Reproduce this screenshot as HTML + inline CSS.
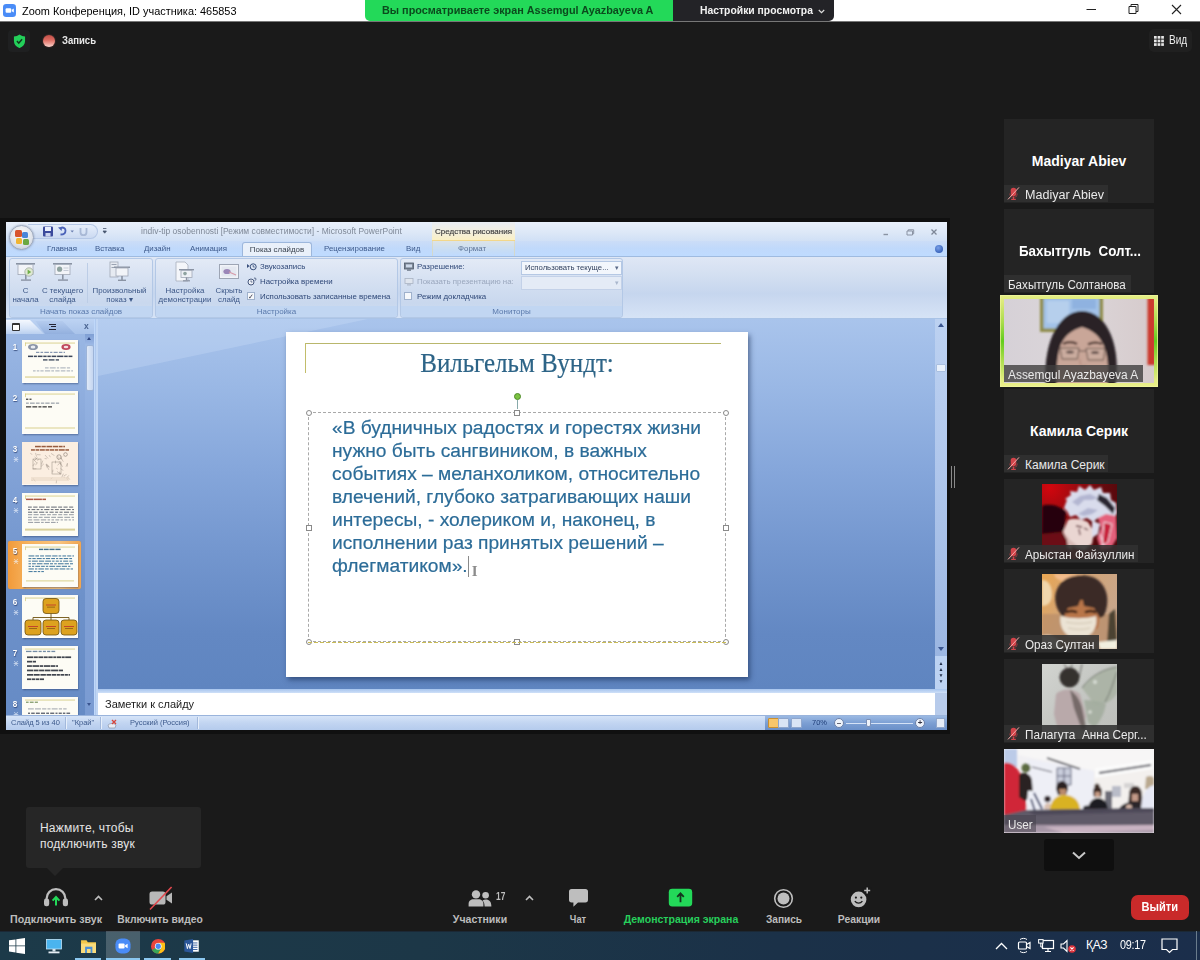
<!DOCTYPE html>
<html lang="ru">
<head>
<meta charset="utf-8">
<title>Zoom Конференция</title>
<style>
*{box-sizing:border-box;margin:0;padding:0}
html,body{width:1200px;height:960px;overflow:hidden}
body{background:#1a1a1a;font-family:"Liberation Sans",sans-serif;position:relative;color:#fff}
.abs{position:absolute}
/* ---------- zoom title bar ---------- */
#tb{position:absolute;left:0;top:0;width:1200px;height:22px;background:#fff;border-bottom:1px solid #777;color:#000;font-size:11.6px}
#tb .ttl{position:absolute;left:21.5px;top:4px;white-space:nowrap;transform:scaleX(.9425);transform-origin:0 0}
#banner{position:absolute;left:365px;top:0;width:308px;height:21px;background:#23d959;border-radius:0 0 0 5px;color:#0b4a1d;font-weight:bold;font-size:10.600px;line-height:21px;padding-left:17px;white-space:nowrap}
#opts{position:absolute;left:673px;top:0;width:161px;height:20.500px;background:#232327;border-radius:0 0 5px 0;color:#f2f2f2;font-weight:bold;font-size:10.600px;line-height:21px;padding-left:27px;white-space:nowrap}
/* ---------- participants ---------- */
.tile{position:absolute;left:1004px;width:150px;height:84px;background:#242424;overflow:hidden}
.tile .big{position:absolute;left:0;right:0;top:34px;text-align:center;font-weight:bold;font-size:14px;color:#fff;white-space:nowrap}
.tile .lab{position:absolute;left:0;bottom:1px;height:17px;background:rgba(49,49,49,.88);color:#eaeaea;font-size:12px;line-height:17px;padding:1.5px 4px 0 4px;white-space:nowrap}
.tile .lab.m{padding-left:21px}

/* ---------- powerpoint ---------- */
#ppt{position:absolute;left:6px;top:222px;width:941px;height:508px;background:#bfd8fa;overflow:hidden;font-size:8px;color:#3b5686;filter:blur(.25px)}
#ppt .abs{position:absolute}
.ptitle{position:absolute;left:0;top:0;width:941px;height:19px;background:linear-gradient(#e9f0fb,#dde8f7 55%,#d0e0f6)}
.qat{position:absolute;left:22px;top:2px;width:70px;height:15px;border-radius:0 8px 8px 0;background:linear-gradient(#e6eefb,#cbdaf1);border:1px solid #b4c7e6;border-left:none}
.pt-text{position:absolute;left:135px;top:4px;font-size:8.45px;color:#7f8998;white-space:nowrap;letter-spacing:.02px}
.ctx{position:absolute;left:426px;top:0;width:83px;height:19px;background:linear-gradient(#e9edf3,#f3efdc 60%,#fbf0c4);border:none;border-bottom:1.5px solid #f3d78a;color:#3c3c3c;font-size:8px;font-weight:normal;-webkit-text-stroke:.15px #3c3c3c;text-align:center;line-height:19px;white-space:nowrap}
.ptabs{position:absolute;left:0;top:19px;width:941px;height:15px;background:linear-gradient(#cbddf7,#c0d9fb 50%,#bfdbff)}
.ptabs span{position:absolute;top:3px;font-size:7.9px;color:#3d5a8c;white-space:nowrap}
.ptabs .act{position:absolute;left:236px;top:1px;width:70px;height:15px;background:#e9f0fa;border:1px solid #9db7dc;border-bottom:none;border-radius:3px 3px 0 0;text-align:center;font-size:7.9px;line-height:13px;color:#39424f;white-space:nowrap}
.ctxline{position:absolute;left:426px;top:0;width:83px;height:15px;border-left:1px solid rgba(227,214,160,.5);border-right:1px solid rgba(227,214,160,.5);background:linear-gradient(rgba(250,240,200,.35),rgba(250,238,180,0))}
.help{position:absolute;left:929px;top:4px;width:8px;height:8px;border-radius:50%;background:radial-gradient(circle at 40% 35%,#7aa0e8,#1f4ca8)}
.orb{position:absolute;left:3px;top:3px;width:25px;height:25px;border-radius:50%;background:radial-gradient(circle at 50% 35%,#fdfdfd,#dfe3ea 60%,#b9c1cf);border:1px solid #9aa6bb;box-shadow:0 0 2px rgba(60,80,120,.5)}
.orb i,.orb b,.orb u,.orb em{position:absolute;width:7px;height:7px;border-radius:1.5px}
.orb i{left:5px;top:4px;background:#d8552e}.orb b{left:12px;top:6px;background:#4a86d8;width:6px;height:6px}
.orb u{left:6px;top:12px;background:#f0b432;width:6px;height:6px}.orb em{left:12.5px;top:12.5px;background:#6aa842;width:6px;height:6px}
.ribbon{position:absolute;left:0;top:34px;width:941px;height:63px;background:linear-gradient(#dfe7f5,#d3dff1 30%,#c6d6ee 60%,#d6e3f6);border-top:1px solid #9fbbe0;border-bottom:1px solid #a9c3e6}
.grp{position:absolute;top:1px;height:60px;border:1px solid #b3c8e6;border-radius:3px;background:linear-gradient(#e3eaf6,#d6e1f2 35%,#c9d8ee 75%,#cddbf0)}
.grp .gl{position:absolute;left:0;right:0;bottom:0;height:11px;background:#c1d6f2;text-align:center;font-size:8px;line-height:11px;color:#5a79ab;white-space:nowrap;border-radius:0 0 3px 3px}
.gsep{position:absolute;top:4px;height:40px;width:1px;background:#bccde6}
.bigb{position:absolute;top:2px;width:0;text-align:center}
.bigb svg{position:absolute;left:-11px;top:0}
.bigb div{position:absolute;top:25px;left:-40px;width:80px;text-align:center;line-height:9px;font-size:7.9px;color:#3b5686;white-space:nowrap}
.sm{position:absolute;height:11px;line-height:11px;font-size:7.9px;color:#2f4878;white-space:nowrap;padding-left:13px}
.sm svg{position:absolute;left:0;top:1px}
.sm.dis{color:#9aa7bd}
.sm .cb{position:absolute;left:0;top:1px;width:8px;height:8px;background:#f6f8fb;border:1px solid #9fb1cc;font-style:normal;font-size:7px;line-height:7px;color:#334;text-align:center}
.dd{position:absolute;width:101px;height:14px;background:#f2f6fc;border:1px solid #b5c8e4;font-size:7.7px;line-height:12px;padding-left:3px;color:#2f3f5c;white-space:nowrap}
.dd b{position:absolute;right:2px;top:0;font-size:7px;color:#5a6a88;font-weight:normal}
.dd.dis{background:#e4ebf6;border-color:#c3d1e8}.dd.dis b{color:#a9b6cc}

.pane{position:absolute;left:0;top:97px;width:88px;height:396px;background:linear-gradient(#9cb9e5,#84a4d8 35%,#6d91ca 70%,#668bc5);overflow:hidden}
.ptab{position:absolute;left:0;top:0;width:88px;height:15px;background:linear-gradient(#bdd3f3,#a9c3ea)}
.ptab .t2{position:absolute;left:29px;top:1.500px;width:40px;height:13.500px;background:linear-gradient(#b4cbee,#93b0de);clip-path:polygon(0 0,27px 0,40px 13.500px,10px 13.500px)}
.ptab .t2 i{position:absolute;left:14px;top:3px;width:7px;height:6.500px;border-top:1.500px solid #223;border-bottom:1.500px solid #223}
.ptab .t2 i:after{content:"";position:absolute;left:2px;top:1.200px;width:5px;height:1.200px;background:#223}
.ptab .t1{position:absolute;left:0;top:1px;width:38px;height:14px;background:linear-gradient(#f4f8fe,#d5e3f7 60%,#b9cfef);clip-path:polygon(0 0,24px 0,38px 14px,0 14px)}
.ptab .t1 i{position:absolute;left:5.500px;top:3px;width:8px;height:7.500px;border:1px solid #333;border-top-width:2px;border-radius:1px;background:#fff}
.ptab .tx{position:absolute;left:78px;top:2px;font-size:8.500px;font-weight:bold;color:#4a6491;line-height:10px}
.sel{position:absolute;left:2px;top:222px;width:73px;height:48px;border-radius:2px;background:linear-gradient(90deg,#f19a3a,#f7b561 30%,#f9c47e 70%,#f0a550);box-shadow:0 0 1px #c87a20}
.th{position:absolute;left:16px;width:56px;height:42.5px;background:#fff;box-shadow:.5px 1px 1.5px rgba(30,50,90,.55);overflow:hidden}
.th em{position:fixed}
.th .ol{position:absolute;left:3px;right:3px;top:3px;height:1px;background:#d9cf8c}
.th .ol.b{top:auto;bottom:4px}
.th .l{position:absolute;height:1.4px;opacity:.8}
.th .c{position:absolute;width:9px;height:5px;border-radius:50%}
.th .bx{position:absolute;background:#dfa21e;border:1px solid #7a5a12;border-radius:3px}
.th .sk{position:absolute;left:9px;top:13px;width:40px;height:26px;background:repeating-linear-gradient(60deg,rgba(120,100,90,.35) 0 1px,transparent 1px 4px),repeating-linear-gradient(-40deg,rgba(120,100,90,.3) 0 1px,transparent 1px 5px)}
.th .tx4{position:absolute;left:6px;top:13px;width:45px;height:20px;background:repeating-linear-gradient(#667 0 1px,transparent 1px 2.8px);opacity:.7}
.th .tx5{position:absolute;left:6px;top:11px;width:43px;height:19px;background:repeating-linear-gradient(#3a6f96 0 1.2px,transparent 1.2px 2.8px);opacity:.85}
.th .tx7{position:absolute;left:5px;top:11px;width:40px;height:26px;background:repeating-linear-gradient(#334 0 1.4px,transparent 1.4px 4.6px);opacity:.75}
.num{position:absolute;left:4px;width:10px;text-align:center;color:#fff;font-weight:bold;font-size:9px;line-height:9px;text-shadow:.5px .8px 1px rgba(30,50,100,.7);transform:scaleX(.9)}
.st{position:absolute;left:6.500px;opacity:.7;transform:scale(.85)}
.vsb{position:absolute;left:78.5px;top:15px;width:10px;height:381px;background:linear-gradient(#9dbae6,#86a6da 40%,#7a9bd2)}
.vsb .up{position:absolute;left:0;top:0;width:10px;height:10px;background:linear-gradient(#7f9fd4,#9ab6e4)}
.vsb .up:after{content:"";position:absolute;left:2.5px;top:3px;border:2.5px solid transparent;border-bottom:3px solid #2c4480;border-top:none}
.vsb .thumb{position:absolute;left:1px;top:11px;width:8px;height:46px;border-radius:2px;background:linear-gradient(90deg,#dfe9f8,#c5d6f0);border:1px solid #9db4d8}
.vsb .dn{position:absolute;left:2.5px;top:369px;border:2.5px solid transparent;border-top:3px solid #3a5590;border-bottom:none}
.split{position:absolute;left:88.5px;top:97px;width:4px;height:396px;background:linear-gradient(90deg,#a7c3ec,#c9dcf6,#a7c3ec)}
.work{position:absolute;left:92px;top:97px;width:849px;height:370px;background:linear-gradient(#a9c4ec 0%,#9ab8e5 18%,#86a7db 40%,#7497cf 62%,#6388c3 85%,#5f85c0 100%);overflow:hidden}
.shine{position:absolute;left:0;top:0;width:275px;height:58px;background:rgba(225,238,255,.22);clip-path:polygon(0 0,270px 0,0 57px)}
.slide{position:absolute;left:188px;top:13px;width:462px;height:345px;background:#fff;box-shadow:2px 3px 5px rgba(20,40,80,.55)}
.sline{position:absolute;left:19px;top:11px;width:416px;height:1px;background:#b9b76c}
.svline{position:absolute;left:19px;top:11px;width:1px;height:30px;background:#c2bd6a}
.stitle{position:absolute;left:0;width:462px;top:16px;text-align:center;font-family:"Liberation Serif",serif;font-size:27px;line-height:31px;color:#2d6487;white-space:nowrap;transform:scaleX(.925);-webkit-text-stroke:.2px #2d6487}
.tbox{position:absolute;left:22px;top:80px;width:418px;height:230px;border:1px dashed #a9a9a9}
.tbox .h{position:absolute;width:6px;height:6px;background:#fff;border:1px solid #8a8a8a}
.tbox .h.c{border-radius:50%}
.tbox .rot{position:absolute;left:205px;top:-20.5px;width:7px;height:7px;border-radius:50%;background:#7cc242;border:1px solid #4d8a28}
.tbox .rotl{position:absolute;left:208px;top:-13px;width:1px;height:9px;background:#8aa}
.tbox .body{position:absolute;left:23px;top:3px;font-size:19.2px;line-height:23.05px;color:#2c6c98;white-space:nowrap;-webkit-text-stroke:.2px #2c6c98}
.caret{display:inline-block;width:1px;height:21px;background:#8a8a8a;vertical-align:-5px;margin-left:0}
.ibeam{font-family:"Liberation Serif",serif;font-size:15px;font-weight:bold;color:#8c8c8c;margin-left:3px;position:relative;top:4px;-webkit-text-stroke:0}
.sbline{position:absolute;left:22px;top:309.5px;width:418px;height:1.5px;background:repeating-linear-gradient(90deg,#c9bb55 0 4px,transparent 4px 6px)}
.wsb{position:absolute;left:837px;top:0;width:12px;height:370px;background:linear-gradient(#bcd1f1,#b0c7ec 40%,#9fb9e3 80%,#98b3e0)}
.wsb .up{position:absolute;left:3px;top:4px;border:3px solid transparent;border-bottom:4px solid #3a5590;border-top:none}
.wsb .thumb{position:absolute;left:1px;top:45px;width:10px;height:8px;background:#e8f0fb;border:1px solid #a9bfe0;border-radius:1px}
.wsb .dn{position:absolute;left:3px;top:328px;border:3px solid transparent;border-top:4px solid #3a5590;border-bottom:none}
.wsb .pg{position:absolute;left:0;top:337px;width:12px;height:33px;background:#bcd2f2;font-size:5px;line-height:6px;color:#1d2a44;text-align:center;padding-top:4px}
.wsb .pg b{display:block;font-weight:normal}
.hsplit{position:absolute;left:92px;top:467px;width:849px;height:4px;background:linear-gradient(#a6c4ee,#cfe0f8)}
.notes{position:absolute;left:92px;top:471px;width:849px;height:22px;background:#fff;color:#1c1c1c;font-size:11px;line-height:22px;padding-left:7px;white-space:nowrap}
.notes .nsb{position:absolute;right:0;top:0;width:12px;height:22px;background:#b7cbeb}
.status{position:absolute;left:0;top:493px;width:941px;height:15px;background:linear-gradient(#d6e4f8,#c2d5f1 50%,#b5cbed);border-top:1px solid #9ab4dc}
.status span{position:absolute;top:2px;font-size:7.5px;color:#3d5a8c;white-space:nowrap;line-height:10px}
.status>i{position:absolute;top:1px;width:1px;height:12px;background:#a3b9dc;box-shadow:1px 0 #e6effb}
.status .sr{position:absolute;left:759px;top:0;width:182px;height:14px;background:linear-gradient(#9bb9e3,#7c9fd3 50%,#6a8fc8)}
.sr .vb{position:absolute;left:3px;top:2px;width:11px;height:10px;background:#d9e4f5;border:1px solid #8fa6cc;border-radius:1px}
.sr .vb.on{background:#f8c66a;border-color:#c98f30}
.sr .zc{position:absolute;top:2px;width:10px;height:10px;border-radius:50%;background:#eef3fb;border:1px solid #6a7fa8;color:#334;font-size:8px;line-height:7px;text-align:center;font-weight:bold}
.sr .zl{position:absolute;left:81px;top:7px;width:67px;height:1px;background:#d5e2f6}
.sr .zt{position:absolute;left:101px;top:3px;width:5px;height:8px;background:#eef3fb;border:1px solid #7a8fb6;border-radius:0 0 2px 2px}
.sr .fit{position:absolute;left:171px;top:2px;width:9px;height:10px;background:#e4ecf8;border:1px solid #8fa6cc}

/* ---------- bottom toolbar ---------- */
.tbtn{position:absolute;top:912px;font-size:11.5px;font-weight:bold;color:#bdbdbd;white-space:nowrap;transform:translateX(-50%);line-height:14px}

.abs{position:absolute}
.sx{display:inline-block;transform-origin:0 50%;white-space:nowrap}
.mic{position:absolute;left:3px;top:1px}
#act{position:absolute;left:1000px;top:295px;width:158px;height:92px;background:linear-gradient(#e6ef86 0%,#dbe97a 8%,#a8dc4a 30%,#62cc1c 50%,#a8dc4a 70%,#e1ec80 92%,#ecf08c 100%);box-shadow:inset 0 0 0 1px rgba(240,245,160,.7)}
#more{position:absolute;left:1044px;top:839px;width:70px;height:32px;background:#0f0f0f;border-radius:3px}
#more svg{position:absolute;left:27px;top:12px}
#tip{position:absolute;left:26px;top:807px;width:175px;height:61px;background:#262626;border-radius:3px;color:#e4e4e4;font-size:12px;line-height:15.500px;padding:14px 0 0 14px;white-space:nowrap;letter-spacing:.2px}
#tip i{position:absolute;left:21px;top:61px;border:8px solid transparent;border-top:8px solid #262626;border-bottom:none}
#leave{position:absolute;left:1131px;top:895px;width:58px;height:25px;border-radius:7px;background:#c92a2a;color:#fff;font-weight:bold;font-size:12px;line-height:25px;text-align:center}
#task>*{margin-top:-1px}
#task .hl{position:absolute;left:106px;top:0;width:34px;height:29px;background:rgba(255,255,255,.2)}
#task .ul{position:absolute;top:27px;height:2px;background:#8cc8f0}
#task .tt{top:7px;font-size:12px;color:#fff;line-height:14px;letter-spacing:-.3px}
#task .dsk{position:absolute;left:1196px;top:0;width:1px;height:29px;background:#6a7c8c}
/* ---------- taskbar ---------- */
#task{position:absolute;left:0;top:931px;width:1200px;height:29px;background:linear-gradient(90deg,#1c3a49 0%,#1c3747 35%,#1b3148 65%,#1b2e4b 100%);border-top:1px solid #1b2835}
</style>
</head>
<body>

<!-- ZOOM TITLE BAR -->
<div id="tb">
  <svg class="abs" style="left:3px;top:4px" width="13" height="13" viewBox="0 0 13 13"><rect width="13" height="13" rx="3.2" fill="#4a8cf7"/><rect x="2.6" y="4.2" width="5.6" height="4.6" rx="1" fill="#fff"/><path d="M8.8 5.8 L10.8 4.5 V8.5 L8.8 7.2Z" fill="#fff"/></svg>
  <div class="ttl">Zoom Конференция, ID участника: 465853</div>
  <div id="banner"><span class="sx" style="transform:scaleX(1.024)">Вы просматриваете экран Assemgul Ayazbayeva A</span></div>
  <div id="opts"><span class="sx" style="transform:scaleX(.979)">Настройки просмотра</span></div>
  <svg class="abs" style="left:1080px;top:0" width="110" height="21" viewBox="0 0 110 21"><path d="M6.500 9.500h9.500" stroke="#222" stroke-width="1"/><path d="M49 6.500h7v7h-7zM51 6.500v-2h7v7h-2" fill="none" stroke="#222" stroke-width="1"/><path d="M92 5l9 9M101 5l-9 9" stroke="#222" stroke-width="1.100"/></svg>
  <svg class="abs" style="left:817.500px;top:8.500px" width="7" height="5" viewBox="0 0 7 5"><path d="M.8 1l2.700 2.700L6.200 1" fill="none" stroke="#ddd" stroke-width="1.200"/></svg>

</div>



<!-- top-left status + view -->
<div class="abs" style="left:8px;top:30px;width:22px;height:22px;border-radius:4px;background:#1f2021"></div>
<svg class="abs" style="left:12.500px;top:33.500px" width="13" height="14.500" viewBox="0 0 14 14" preserveAspectRatio="none"><path d="M7 .4C5.200 1.600 3.200 2.200 1 2.300v4.500c0 3.200 2.200 5.400 6 6.800 3.800-1.400 6-3.600 6-6.800V2.300C10.800 2.200 8.800 1.600 7 .4z" fill="#23d05a"/><path d="M4.200 6.800l2 2 3.600-3.800" fill="none" stroke="#12361e" stroke-width="1.500"/></svg>
<div class="abs" style="left:42.500px;top:35px;width:12px;height:12px;border-radius:50%;background:linear-gradient(#c4524a 5%,#dc6a60 40%,#ee9c92 70%,#f7d6d0 100%);box-shadow:0 0 1.500px rgba(230,120,110,.6)"></div>
<div class="abs" id="rec" style="left:62px;top:33px;transform:scaleX(.865);transform-origin:0 0;font-size:11px;font-weight:bold;color:#e9e9e9;line-height:14px">Запись</div>
<div class="abs" style="left:1149px;top:29px;width:43px;height:23px;border-radius:5px;background:#202020"></div>
<svg class="abs" style="left:1154px;top:35.500px" width="10" height="10" viewBox="0 0 10 10"><g fill="#e6e6e6"><rect x="0" y="0" width="2.700" height="2.700"/><rect x="3.600" y="0" width="2.700" height="2.700"/><rect x="7.200" y="0" width="2.700" height="2.700"/><rect x="0" y="3.600" width="2.700" height="2.700"/><rect x="3.600" y="3.600" width="2.700" height="2.700"/><rect x="7.200" y="3.600" width="2.700" height="2.700"/><rect x="0" y="7.200" width="2.700" height="2.700"/><rect x="3.600" y="7.200" width="2.700" height="2.700"/><rect x="7.200" y="7.200" width="2.700" height="2.700"/></g></svg>
<div class="abs" id="vid" style="left:1168.7px;top:33px;transform:scaleX(.84);transform-origin:0 0;font-size:12px;color:#efefef;line-height:14px">Вид</div>
<!-- splitter handle -->
<div class="abs" style="left:950.500px;top:466px;width:1.500px;height:22px;background:#8a8a8a"></div>
<div class="abs" style="left:953.500px;top:466px;width:1.500px;height:22px;background:#8a8a8a"></div>

<div class="abs" style="left:0;top:218px;width:950px;height:516px;background:#101010"></div>
<!-- POWERPOINT WINDOW (shared screen) -->
<div id="ppt">
  <div class="ptitle">
    <div class="qat"></div>
    <svg class="abs" style="left:36px;top:3px" width="70" height="14" viewBox="0 0 70 14">
      <rect x="1" y="1.5" width="10" height="10" rx="1" fill="#3b4a9c"/><rect x="3" y="2" width="6" height="4" fill="#e8eefc"/><rect x="3.5" y="8" width="5" height="3.5" fill="#c9d3ee"/>
      <path d="M18.5 9.5c3.5 0 5-1.6 5-3.8s-1.6-3.2-3.8-3.2" fill="none" stroke="#4a62b8" stroke-width="1.8"/><path d="M16 2.5l4.2-.8-.6 4.2z" fill="#4a62b8"/>
      <path d="M28.5 5.5h3.4l-1.7 2z" fill="#6b7fb0"/>
      <path d="M38.5 3v4.2a3 3 0 0 0 6 0V3" fill="none" stroke="#a9b9d6" stroke-width="1.8"/>
      <path d="M61 3.5h3.4M61 6h3.4l-1.7 2.2z" stroke="#46556f" stroke-width=".8" fill="#46556f"/>
    </svg>
    <div class="pt-text">indiv-tip osobennosti [Режим совместимости] - Microsoft PowerPoint</div>
    <div class="ctx">Средства рисования</div>
    <svg class="abs" style="left:866px;top:5px" width="70" height="12" viewBox="0 0 70 12"><path d="M11.500 7.500h4.500" stroke="#8a93a3" stroke-width="1.400"/><path d="M35 4h5.500v4H35zM36.200 4V2.800h5.500v4H40.500" fill="none" stroke="#8a93a3" stroke-width="1"/><path d="M59.500 2.500l5 5M64.500 2.500l-5 5" stroke="#7d8797" stroke-width="1.300"/></svg>
  </div>
  <div class="ptabs">
    <span style="left:41px">Главная</span><span style="left:89px">Вставка</span><span style="left:138px">Дизайн</span><span style="left:184px">Анимация</span>
    <div class="act">Показ слайдов</div>
    <span style="left:318px">Рецензирование</span><span style="left:400px">Вид</span><span style="left:452px">Формат</span>
    <div class="ctxline"></div>
    <div class="help"></div>
  </div>
  <div class="orb"><i></i><b></b><u></u><em></em></div>
  <div class="ribbon">
    <div class="grp" style="left:3px;width:144px"><div class="gl">Начать показ слайдов</div>
      <div class="gsep" style="left:77px"></div>
      <div class="bigb" style="left:15.5px"><svg width="22" height="22" viewBox="0 0 22 22"><rect x="1" y="2" width="19" height="1.6" fill="#8a93a3"/><rect x="3" y="3.6" width="15" height="10" fill="#f2f4f8" stroke="#a0a8b6" stroke-width=".8"/><rect x="10" y="13.6" width="1.6" height="5" fill="#8a93a3"/><rect x="6" y="18.4" width="10" height="1.4" fill="#8a93a3"/><circle cx="14" cy="11" r="4.2" fill="#dfe9d2" stroke="#9aa39a" stroke-width=".7"/><path d="M12.6 8.6l3.6 2.4-3.6 2.4z" fill="#6fae48"/></svg><div>С<br>начала</div></div>
      <div class="bigb" style="left:52.5px"><svg width="22" height="22" viewBox="0 0 22 22"><rect x="1" y="2" width="19" height="1.6" fill="#8a93a3"/><rect x="3" y="3.6" width="15" height="10" fill="#f2f4f8" stroke="#a0a8b6" stroke-width=".8"/><rect x="10" y="13.6" width="1.6" height="5" fill="#8a93a3"/><rect x="6" y="18.4" width="10" height="1.4" fill="#8a93a3"/><circle cx="7.6" cy="8.2" r="2.6" fill="#8fa3a0"/><rect x="11.5" y="6.5" width="5" height="1" fill="#c5cbd6"/><rect x="11.5" y="9" width="5" height="1" fill="#c5cbd6"/></svg><div>С текущего<br>слайда</div></div>
      <div class="bigb" style="left:109.5px"><svg width="22" height="22" viewBox="0 0 22 22"><rect x="1" y="1" width="8" height="15" fill="#e6eaf1" stroke="#a0a8b6" stroke-width=".8"/><rect x="2.5" y="3" width="5" height="1" fill="#9aa3b2"/><rect x="2.5" y="6" width="5" height="1" fill="#9aa3b2"/><rect x="5" y="5.5" width="16" height="1.5" fill="#8a93a3"/><rect x="7" y="7" width="12" height="8" fill="#f2f4f8" stroke="#a0a8b6" stroke-width=".8"/><rect x="12.2" y="15" width="1.6" height="4" fill="#8a93a3"/><rect x="9" y="18.6" width="8" height="1.4" fill="#8a93a3"/></svg><div>Произвольный<br>показ ▾</div></div>
    </div>
    <div class="grp" style="left:149px;width:243px"><div class="gl">Настройка</div>
      <div class="bigb" style="left:29px"><svg width="22" height="22" viewBox="0 0 22 22"><path d="M2 1h9l3 3v16H2z" fill="#f4f6fa" stroke="#a7aebb" stroke-width=".8"/><rect x="5" y="8" width="15" height="1.4" fill="#8a93a3"/><rect x="7" y="9.4" width="11" height="7" fill="#eef1f6" stroke="#a0a8b6" stroke-width=".8"/><circle cx="11" cy="12.6" r="1.8" fill="#8fa3a0"/><rect x="11.8" y="16.4" width="1.4" height="3" fill="#8a93a3"/><rect x="9" y="19.2" width="7" height="1.2" fill="#8a93a3"/></svg><div>Настройка<br>демонстрации</div></div>
      <div class="bigb" style="left:73px"><svg width="22" height="22" viewBox="0 0 22 22"><rect x="1.5" y="3.5" width="19" height="14" fill="#f1f3f8" stroke="#9da5b4" stroke-width="1"/><rect x="3.5" y="5.5" width="15" height="10" fill="#e4e8f0"/><ellipse cx="9" cy="10.5" rx="3.6" ry="2.6" fill="#9b86b8"/><path d="M11 11l7 3" stroke="#d79aa8" stroke-width="1.2"/></svg><div>Скрыть<br>слайд</div></div>
      <div class="sm" style="left:91px;top:2px"><svg width="10" height="9" viewBox="0 0 10 9"><path d="M0 2l2.6 2L0 6z" fill="#39507c"/><circle cx="6.2" cy="4.8" r="3" fill="none" stroke="#39507c" stroke-width="1"/><path d="M6.2 3v2h1.6" stroke="#39507c" stroke-width=".8" fill="none"/></svg>Звукозапись</div>
      <div class="sm" style="left:91px;top:17px"><svg width="10" height="9" viewBox="0 0 10 9"><circle cx="4" cy="5" r="3" fill="#eef1f7" stroke="#46587c" stroke-width="1"/><path d="M4 3.4V5h1.4" stroke="#46587c" stroke-width=".8" fill="none"/><path d="M7 1.2c1.6-.6 2.6.6 1.6 1.8l-.8.8" stroke="#46587c" stroke-width=".9" fill="none"/></svg>Настройка времени</div>
      <div class="sm" style="left:91px;top:32px"><i class="cb">✓</i>Использовать записанные времена</div>
    </div>
    <div class="grp" style="left:394px;width:223px"><div class="gl">Мониторы</div>
      <div class="sm" style="left:3px;top:2px"><svg width="10" height="9" viewBox="0 0 10 9"><rect x=".5" y="1" width="9" height="6" fill="#7c8796" stroke="#4e5a6b" stroke-width=".8"/><rect x="2" y="2.4" width="6" height="3" fill="#cdd9ea"/><rect x="3" y="7.6" width="4" height="1" fill="#4e5a6b"/></svg>Разрешение:</div>
      <div class="sm dis" style="left:3px;top:17px"><svg width="10" height="9" viewBox="0 0 10 9"><rect x="1" y="1.5" width="8" height="5" fill="#dfe5ee" stroke="#a8b2c2" stroke-width=".8"/><rect x="3" y="7.4" width="4" height="1" fill="#a8b2c2"/></svg>Показать презентацию на:</div>
      <div class="sm" style="left:3px;top:32px"><i class="cb"></i>Режим докладчика</div>
      <div class="dd" style="left:120px;top:2px">Использовать текуще...<b>▾</b></div>
      <div class="dd dis" style="left:120px;top:17px"><b>▾</b></div>
    </div>
  </div>

  <!-- left thumbnail pane -->
  <div class="pane">
    <div class="ptab">
      <div class="t2"><i></i></div><div class="t1"><i></i></div><div class="tx">x</div>
    </div>
    <div class="sel"></div><div class="num" style="top:24px">1</div><div class="num" style="top:75px">2</div><div class="num" style="top:126px">3</div><div class="num" style="top:177px">4</div><div class="num" style="top:228px">5</div><div class="num" style="top:279px">6</div><div class="num" style="top:330px">7</div><div class="num" style="top:381px">8</div>
    <div class="th" style="top:21px"><svg width="56" height="42.5" viewBox="0 0 56 42.5" style="position:absolute;left:0;top:0"><rect width="56" height="42.5" fill="#fdfcf5"/><rect x="3" y="2.6" width="50" height=".9" fill="#d6cd88"/><rect x="3" y="2.6" width=".8" height="3.500" fill="#d6cd88"/><ellipse cx="11" cy="7" rx="5" ry="3.100" fill="#8a94a6"/><ellipse cx="11" cy="7" rx="2.400" ry="1.500" fill="#e9ecf1"/><ellipse cx="44" cy="7" rx="4.600" ry="2.900" fill="#c0485c"/><ellipse cx="44" cy="7" rx="2.300" ry="1.300" fill="#f4dfe2"/><rect x="14.0" y="11.8" width="3.3" height="1.1" fill="#5a7196" opacity="0.8"/><rect x="18.5" y="11.8" width="2.6" height="1.1" fill="#5a7196" opacity="0.8"/><rect x="22.3" y="11.8" width="4.6" height="1.1" fill="#5a7196" opacity="0.8"/><rect x="28.1" y="11.8" width="2.3" height="1.1" fill="#5a7196" opacity="0.8"/><rect x="31.6" y="11.8" width="4.1" height="1.1" fill="#5a7196" opacity="0.8"/><rect x="36.9" y="11.8" width="3.5" height="1.1" fill="#5a7196" opacity="0.8"/><rect x="41.6" y="11.8" width="1.4" height="1.1" fill="#5a7196" opacity="0.8"/><rect x="6.0" y="15.6" width="5.0" height="1.5" fill="#26324a" opacity="0.9"/><rect x="11.8" y="15.6" width="3.1" height="1.5" fill="#26324a" opacity="0.9"/><rect x="15.8" y="15.6" width="4.7" height="1.5" fill="#26324a" opacity="0.9"/><rect x="21.3" y="15.6" width="3.3" height="1.5" fill="#26324a" opacity="0.9"/><rect x="25.4" y="15.6" width="3.4" height="1.5" fill="#26324a" opacity="0.9"/><rect x="29.6" y="15.6" width="4.7" height="1.5" fill="#26324a" opacity="0.9"/><rect x="35.1" y="15.6" width="6.3" height="1.5" fill="#26324a" opacity="0.9"/><rect x="42.2" y="15.6" width="3.5" height="1.5" fill="#26324a" opacity="0.9"/><rect x="46.5" y="15.6" width="3.9" height="1.5" fill="#26324a" opacity="0.9"/><rect x="21.0" y="19.2" width="4.5" height="1.4" fill="#26324a" opacity="0.85"/><rect x="26.7" y="19.2" width="5.8" height="1.4" fill="#26324a" opacity="0.85"/><rect x="33.7" y="19.2" width="3.3" height="1.4" fill="#26324a" opacity="0.85"/><rect x="23.0" y="27.4" width="3.6" height="1" fill="#8d98a8" opacity="0.8"/><rect x="27.8" y="27.4" width="5.9" height="1" fill="#8d98a8" opacity="0.8"/><rect x="34.9" y="27.4" width="2.2" height="1" fill="#8d98a8" opacity="0.8"/><rect x="38.3" y="27.4" width="5.4" height="1" fill="#8d98a8" opacity="0.8"/><rect x="44.9" y="27.4" width="3.2" height="1" fill="#8d98a8" opacity="0.8"/><rect x="11.0" y="30.4" width="2.6" height="1" fill="#8d98a8" opacity="0.8"/><rect x="14.8" y="30.4" width="2.5" height="1" fill="#8d98a8" opacity="0.8"/><rect x="18.4" y="30.4" width="3.2" height="1" fill="#8d98a8" opacity="0.8"/><rect x="22.9" y="30.4" width="5.3" height="1" fill="#8d98a8" opacity="0.8"/><rect x="29.3" y="30.4" width="2.7" height="1" fill="#8d98a8" opacity="0.8"/><rect x="33.3" y="30.4" width="4.3" height="1" fill="#8d98a8" opacity="0.8"/><rect x="38.8" y="30.4" width="4.6" height="1" fill="#8d98a8" opacity="0.8"/><rect x="44.6" y="30.4" width="3.5" height="1" fill="#8d98a8" opacity="0.8"/><rect x="49.2" y="30.4" width="1.8" height="1" fill="#8d98a8" opacity="0.8"/><rect x="3" y="36.4" width="50" height="1.300" fill="#ddd59a"/></svg></div>
    <div class="th" style="top:72px"><svg width="56" height="42.5" viewBox="0 0 56 42.5" style="position:absolute;left:0;top:0"><rect width="56" height="42.5" fill="#fdfcf5"/><rect x="3" y="2.6" width="50" height=".9" fill="#d6cd88"/><rect x="3" y="2.6" width=".8" height="3.500" fill="#d6cd88"/><rect x="4.0" y="7.6" width="2.3" height="1.3" fill="#333" opacity="0.9"/><rect x="7.5" y="7.6" width="2.0" height="1.3" fill="#333" opacity="0.9"/><rect x="4.0" y="11.6" width="2.8" height="1.1" fill="#7d8694" opacity="0.85"/><rect x="8.0" y="11.6" width="4.7" height="1.1" fill="#7d8694" opacity="0.85"/><rect x="13.9" y="11.6" width="3.7" height="1.1" fill="#7d8694" opacity="0.85"/><rect x="18.9" y="11.6" width="3.3" height="1.1" fill="#7d8694" opacity="0.85"/><rect x="23.3" y="11.6" width="4.3" height="1.1" fill="#7d8694" opacity="0.85"/><rect x="28.9" y="11.6" width="3.8" height="1.1" fill="#7d8694" opacity="0.85"/><rect x="33.9" y="11.6" width="3.2" height="1.1" fill="#7d8694" opacity="0.85"/><rect x="4.0" y="15.2" width="5.2" height="1.3" fill="#2c2c2c" opacity="0.9"/><rect x="10.4" y="15.2" width="4.8" height="1.3" fill="#2c2c2c" opacity="0.9"/><rect x="16.4" y="15.2" width="3.0" height="1.3" fill="#2c2c2c" opacity="0.9"/><rect x="20.5" y="15.2" width="4.3" height="1.3" fill="#2c2c2c" opacity="0.9"/><rect x="26.0" y="15.2" width="4.0" height="1.3" fill="#2c2c2c" opacity="0.9"/><rect x="3" y="36" width="50" height="2" fill="#ebe6c2"/></svg></div>
    <div class="th" style="top:123px"><svg width="56" height="42.5" viewBox="0 0 56 42.5" style="position:absolute;left:0;top:0"><rect width="56" height="42.5" fill="#fbeee1"/><rect x="13.0" y="3.8" width="5.8" height="1.5" fill="#8c4a2c" opacity="0.9"/><rect x="19.5" y="3.8" width="4.3" height="1.5" fill="#8c4a2c" opacity="0.9"/><rect x="24.5" y="3.8" width="5.6" height="1.5" fill="#8c4a2c" opacity="0.9"/><rect x="30.8" y="3.8" width="5.5" height="1.5" fill="#8c4a2c" opacity="0.9"/><rect x="37.0" y="3.8" width="3.6" height="1.5" fill="#8c4a2c" opacity="0.9"/><rect x="41.3" y="3.8" width="1.7" height="1.5" fill="#8c4a2c" opacity="0.9"/><rect x="9.0" y="7.2" width="3.9" height="1.5" fill="#8c4a2c" opacity="0.9"/><rect x="13.6" y="7.2" width="3.7" height="1.5" fill="#8c4a2c" opacity="0.9"/><rect x="18.0" y="7.2" width="4.8" height="1.5" fill="#8c4a2c" opacity="0.9"/><rect x="23.5" y="7.2" width="3.8" height="1.5" fill="#8c4a2c" opacity="0.9"/><rect x="27.9" y="7.2" width="4.3" height="1.5" fill="#8c4a2c" opacity="0.9"/><rect x="32.9" y="7.2" width="3.4" height="1.5" fill="#8c4a2c" opacity="0.9"/><rect x="37.0" y="7.2" width="5.7" height="1.5" fill="#8c4a2c" opacity="0.9"/><rect x="43.4" y="7.2" width="3.6" height="1.5" fill="#8c4a2c" opacity="0.9"/><path d="M41.4 31.7l-1.7 3.8" stroke="#6e6258" stroke-width=".5" opacity=".6"/><path d="M13.4 23.3l2.1 -2.8" stroke="#6e6258" stroke-width=".5" opacity=".6"/><path d="M27.1 13.1l1.3 2.1" stroke="#6e6258" stroke-width=".5" opacity=".6"/><path d="M30.2 35.6l-1.5 1.6" stroke="#6e6258" stroke-width=".5" opacity=".6"/><path d="M31.0 27.7l-0.4 2.7" stroke="#6e6258" stroke-width=".5" opacity=".6"/><path d="M44.0 24.8l1.3 -3.5" stroke="#6e6258" stroke-width=".5" opacity=".6"/><path d="M35.0 29.5l3.9 2.6" stroke="#6e6258" stroke-width=".5" opacity=".6"/><path d="M19.5 22.4l1.3 -3.8" stroke="#6e6258" stroke-width=".5" opacity=".6"/><path d="M26.1 16.5l-3.1 -3.5" stroke="#6e6258" stroke-width=".5" opacity=".6"/><path d="M37.4 15.5l-2.0 -0.9" stroke="#6e6258" stroke-width=".5" opacity=".6"/><path d="M41.2 14.2l-0.4 0.4" stroke="#6e6258" stroke-width=".5" opacity=".6"/><path d="M41.7 34.1l2.9 -1.8" stroke="#6e6258" stroke-width=".5" opacity=".6"/><path d="M24.4 21.7l3.1 3.7" stroke="#6e6258" stroke-width=".5" opacity=".6"/><path d="M14.6 16.8l-2.1 -2.1" stroke="#6e6258" stroke-width=".5" opacity=".6"/><path d="M26.9 27.9l-1.9 -4.0" stroke="#6e6258" stroke-width=".5" opacity=".6"/><path d="M24.5 22.0l0.5 3.6" stroke="#6e6258" stroke-width=".5" opacity=".6"/><path d="M34.5 25.9l0.9 1.4" stroke="#6e6258" stroke-width=".5" opacity=".6"/><path d="M11.0 36.3l2.2 3.0" stroke="#6e6258" stroke-width=".5" opacity=".6"/><path d="M38.5 22.6l-0.8 -3.2" stroke="#6e6258" stroke-width=".5" opacity=".6"/><path d="M32.5 13.7l-3.5 -2.3" stroke="#6e6258" stroke-width=".5" opacity=".6"/><path d="M15.0 21.2l-3.6 -4.0" stroke="#6e6258" stroke-width=".5" opacity=".6"/><path d="M14.6 14.7l-1.1 -3.8" stroke="#6e6258" stroke-width=".5" opacity=".6"/><path d="M41.4 28.6l-2.8 -2.0" stroke="#6e6258" stroke-width=".5" opacity=".6"/><path d="M21.9 21.8l-3.0 2.8" stroke="#6e6258" stroke-width=".5" opacity=".6"/><path d="M45.7 24.6l-0.1 -3.3" stroke="#6e6258" stroke-width=".5" opacity=".6"/><path d="M12.8 21.3l-1.9 2.6" stroke="#6e6258" stroke-width=".5" opacity=".6"/><path d="M15.0 12.6l3.6 0.2" stroke="#6e6258" stroke-width=".5" opacity=".6"/><path d="M14.4 26.7l-3.8 0.2" stroke="#6e6258" stroke-width=".5" opacity=".6"/><path d="M45.2 35.3l1.6 -1.9" stroke="#6e6258" stroke-width=".5" opacity=".6"/><path d="M22.6 16.5l2.2 0.3" stroke="#6e6258" stroke-width=".5" opacity=".6"/><path d="M37.8 20.9l-2.2 2.5" stroke="#6e6258" stroke-width=".5" opacity=".6"/><path d="M45.4 35.0l2.4 2.5" stroke="#6e6258" stroke-width=".5" opacity=".6"/><path d="M36.4 18.1l0.1 -1.2" stroke="#6e6258" stroke-width=".5" opacity=".6"/><path d="M10.1 12.8l-1.8 -1.9" stroke="#6e6258" stroke-width=".5" opacity=".6"/><path d="M34.6 37.8l-0.4 3.5" stroke="#6e6258" stroke-width=".5" opacity=".6"/><path d="M45.6 37.8l-1.1 -2.2" stroke="#6e6258" stroke-width=".5" opacity=".6"/><path d="M17.4 17.3l-2.4 1.0" stroke="#6e6258" stroke-width=".5" opacity=".6"/><path d="M42.3 34.7l-0.2 1.2" stroke="#6e6258" stroke-width=".5" opacity=".6"/><path d="M38.6 14.3l1.3 3.3" stroke="#6e6258" stroke-width=".5" opacity=".6"/><path d="M37.9 32.3l-0.2 -2.6" stroke="#6e6258" stroke-width=".5" opacity=".6"/><path d="M38.2 21.0l2.4 3.8" stroke="#6e6258" stroke-width=".5" opacity=".6"/><path d="M23.6 22.8l3.6 1.8" stroke="#6e6258" stroke-width=".5" opacity=".6"/><path d="M15.3 15.4l-2.8 3.2" stroke="#6e6258" stroke-width=".5" opacity=".6"/><path d="M38.8 15.9l2.6 3.8" stroke="#6e6258" stroke-width=".5" opacity=".6"/><path d="M33.3 21.5l0.4 -3.0" stroke="#6e6258" stroke-width=".5" opacity=".6"/><path d="M9.5 38.2l1.2 0.2" stroke="#6e6258" stroke-width=".5" opacity=".6"/><rect x="11" y="17" width="8" height="10" fill="none" stroke="#6e6258" stroke-width=".5" opacity=".7"/><rect x="30" y="20" width="9" height="12" fill="none" stroke="#6e6258" stroke-width=".5" opacity=".7"/><circle cx="37" cy="15" r="2.200" fill="none" stroke="#6e6258" stroke-width=".5"/><circle cx="43.500" cy="12.500" r="1.800" fill="none" stroke="#6e6258" stroke-width=".5"/><rect x="9" y="35" width="38" height="4" fill="#e9d9c6" opacity=".6"/></svg></div>
    <svg class="st" style="top:137px" width="6" height="7" viewBox="0 0 6 7"><path d="M1 .5l4 6M5 .5l-4 6M0 3.500h6" stroke="#eef3fb" stroke-width="1"/></svg>
    <div class="th" style="top:174px"><svg width="56" height="42.5" viewBox="0 0 56 42.5" style="position:absolute;left:0;top:0"><rect width="56" height="42.5" fill="#fdfcf5"/><rect x="3" y="2.6" width="50" height=".9" fill="#d6cd88"/><rect x="3" y="2.6" width=".8" height="3.500" fill="#d6cd88"/><rect x="4.0" y="5.6" width="7.5" height="1.5" fill="#a6432f" opacity="0.9"/><rect x="12.0" y="5.6" width="7.9" height="1.5" fill="#a6432f" opacity="0.9"/><rect x="20.4" y="5.6" width="3.6" height="1.5" fill="#a6432f" opacity="0.9"/><rect x="6.0" y="13.6" width="3.8" height="1" fill="#3c4452" opacity="0.8"/><rect x="11.2" y="13.6" width="4.3" height="1" fill="#3c4452" opacity="0.8"/><rect x="17.0" y="13.6" width="5.6" height="1" fill="#3c4452" opacity="0.8"/><rect x="24.0" y="13.6" width="3.7" height="1" fill="#3c4452" opacity="0.8"/><rect x="29.1" y="13.6" width="5.7" height="1" fill="#3c4452" opacity="0.8"/><rect x="36.1" y="13.6" width="4.0" height="1" fill="#3c4452" opacity="0.8"/><rect x="41.5" y="13.6" width="4.1" height="1" fill="#3c4452" opacity="0.8"/><rect x="47.1" y="13.6" width="4.1" height="1" fill="#3c4452" opacity="0.8"/><rect x="6.0" y="16.1" width="2.1" height="1" fill="#3c4452" opacity="0.8"/><rect x="9.5" y="16.1" width="3.8" height="1" fill="#3c4452" opacity="0.8"/><rect x="14.6" y="16.1" width="2.7" height="1" fill="#3c4452" opacity="0.8"/><rect x="18.8" y="16.1" width="2.0" height="1" fill="#3c4452" opacity="0.8"/><rect x="22.2" y="16.1" width="5.2" height="1" fill="#3c4452" opacity="0.8"/><rect x="28.8" y="16.1" width="2.7" height="1" fill="#3c4452" opacity="0.8"/><rect x="32.9" y="16.1" width="3.9" height="1" fill="#3c4452" opacity="0.8"/><rect x="38.2" y="16.1" width="4.9" height="1" fill="#3c4452" opacity="0.8"/><rect x="44.5" y="16.1" width="4.2" height="1" fill="#3c4452" opacity="0.8"/><rect x="50.1" y="16.1" width="1.9" height="1" fill="#3c4452" opacity="0.8"/><rect x="6.0" y="18.7" width="4.1" height="1" fill="#3c4452" opacity="0.8"/><rect x="11.5" y="18.7" width="4.2" height="1" fill="#3c4452" opacity="0.8"/><rect x="17.1" y="18.7" width="5.1" height="1" fill="#3c4452" opacity="0.8"/><rect x="23.6" y="18.7" width="2.4" height="1" fill="#3c4452" opacity="0.8"/><rect x="27.5" y="18.7" width="4.2" height="1" fill="#3c4452" opacity="0.8"/><rect x="33.1" y="18.7" width="3.0" height="1" fill="#3c4452" opacity="0.8"/><rect x="37.5" y="18.7" width="3.1" height="1" fill="#3c4452" opacity="0.8"/><rect x="42.0" y="18.7" width="5.1" height="1" fill="#3c4452" opacity="0.8"/><rect x="48.5" y="18.7" width="3.5" height="1" fill="#3c4452" opacity="0.8"/><rect x="6.0" y="21.2" width="4.2" height="1" fill="#7a828e" opacity="0.8"/><rect x="11.6" y="21.2" width="5.0" height="1" fill="#7a828e" opacity="0.8"/><rect x="18.1" y="21.2" width="5.6" height="1" fill="#7a828e" opacity="0.8"/><rect x="25.1" y="21.2" width="3.8" height="1" fill="#7a828e" opacity="0.8"/><rect x="30.3" y="21.2" width="4.5" height="1" fill="#7a828e" opacity="0.8"/><rect x="36.2" y="21.2" width="4.0" height="1" fill="#7a828e" opacity="0.8"/><rect x="41.6" y="21.2" width="4.0" height="1" fill="#7a828e" opacity="0.8"/><rect x="47.0" y="21.2" width="4.8" height="1" fill="#7a828e" opacity="0.8"/><rect x="6.0" y="23.8" width="3.8" height="1" fill="#7a828e" opacity="0.8"/><rect x="11.2" y="23.8" width="4.1" height="1" fill="#7a828e" opacity="0.8"/><rect x="16.7" y="23.8" width="3.9" height="1" fill="#7a828e" opacity="0.8"/><rect x="22.1" y="23.8" width="5.8" height="1" fill="#7a828e" opacity="0.8"/><rect x="29.2" y="23.8" width="4.8" height="1" fill="#7a828e" opacity="0.8"/><rect x="35.4" y="23.8" width="5.5" height="1" fill="#7a828e" opacity="0.8"/><rect x="42.3" y="23.8" width="5.8" height="1" fill="#7a828e" opacity="0.8"/><rect x="49.5" y="23.8" width="2.5" height="1" fill="#7a828e" opacity="0.8"/><rect x="6.0" y="26.4" width="4.2" height="1" fill="#7a828e" opacity="0.8"/><rect x="11.6" y="26.4" width="5.8" height="1" fill="#7a828e" opacity="0.8"/><rect x="18.8" y="26.4" width="5.4" height="1" fill="#7a828e" opacity="0.8"/><rect x="25.6" y="26.4" width="2.5" height="1" fill="#7a828e" opacity="0.8"/><rect x="29.5" y="26.4" width="2.5" height="1" fill="#7a828e" opacity="0.8"/><rect x="33.4" y="26.4" width="3.8" height="1" fill="#7a828e" opacity="0.8"/><rect x="38.6" y="26.4" width="2.3" height="1" fill="#7a828e" opacity="0.8"/><rect x="42.3" y="26.4" width="3.0" height="1" fill="#7a828e" opacity="0.8"/><rect x="46.6" y="26.4" width="2.3" height="1" fill="#7a828e" opacity="0.8"/><rect x="50.3" y="26.4" width="1.7" height="1" fill="#7a828e" opacity="0.8"/><rect x="6.0" y="28.9" width="5.1" height="1" fill="#7a828e" opacity="0.8"/><rect x="12.3" y="28.9" width="5.6" height="1" fill="#7a828e" opacity="0.8"/><rect x="19.1" y="28.9" width="2.6" height="1" fill="#7a828e" opacity="0.8"/><rect x="22.9" y="28.9" width="4.9" height="1" fill="#7a828e" opacity="0.8"/><rect x="29.0" y="28.9" width="4.6" height="1" fill="#7a828e" opacity="0.8"/><rect x="34.8" y="28.9" width="1.2" height="1" fill="#7a828e" opacity="0.8"/><rect x="3" y="35.6" width="50" height="2" fill="#d9d09a"/></svg></div>
    <svg class="st" style="top:188px" width="6" height="7" viewBox="0 0 6 7"><path d="M1 .5l4 6M5 .5l-4 6M0 3.500h6" stroke="#eef3fb" stroke-width="1"/></svg>
    <div class="th" style="top:225px"><svg width="56" height="42.5" viewBox="0 0 56 42.5" style="position:absolute;left:0;top:0"><rect width="56" height="42.5" fill="#fdfcf5"/><rect x="3" y="2.6" width="50" height=".9" fill="#d6cd88"/><rect x="3" y="2.6" width=".8" height="3.500" fill="#d6cd88"/><rect x="17.0" y="4.7" width="4.2" height="1.4" fill="#2c5f80" opacity="0.9"/><rect x="21.9" y="4.7" width="4.8" height="1.4" fill="#2c5f80" opacity="0.9"/><rect x="27.4" y="4.7" width="5.2" height="1.4" fill="#2c5f80" opacity="0.9"/><rect x="33.4" y="4.7" width="5.2" height="1.4" fill="#2c5f80" opacity="0.9"/><rect x="6.5" y="11.4" width="5.8" height="1.1" fill="#2f6a94" opacity="0.85"/><rect x="13.4" y="11.4" width="3.6" height="1.1" fill="#2f6a94" opacity="0.85"/><rect x="18.1" y="11.4" width="3.9" height="1.1" fill="#2f6a94" opacity="0.85"/><rect x="23.2" y="11.4" width="6.0" height="1.1" fill="#2f6a94" opacity="0.85"/><rect x="30.2" y="11.4" width="5.3" height="1.1" fill="#2f6a94" opacity="0.85"/><rect x="36.6" y="11.4" width="2.6" height="1.1" fill="#2f6a94" opacity="0.85"/><rect x="40.4" y="11.4" width="3.7" height="1.1" fill="#2f6a94" opacity="0.85"/><rect x="45.2" y="11.4" width="4.1" height="1.1" fill="#2f6a94" opacity="0.85"/><rect x="50.4" y="11.4" width="1.6" height="1.1" fill="#2f6a94" opacity="0.85"/><rect x="6.5" y="14.0" width="2.8" height="1.1" fill="#2f6a94" opacity="0.85"/><rect x="10.4" y="14.0" width="3.3" height="1.1" fill="#2f6a94" opacity="0.85"/><rect x="14.8" y="14.0" width="4.9" height="1.1" fill="#2f6a94" opacity="0.85"/><rect x="20.7" y="14.0" width="2.1" height="1.1" fill="#2f6a94" opacity="0.85"/><rect x="23.9" y="14.0" width="4.2" height="1.1" fill="#2f6a94" opacity="0.85"/><rect x="29.2" y="14.0" width="3.8" height="1.1" fill="#2f6a94" opacity="0.85"/><rect x="34.1" y="14.0" width="2.1" height="1.1" fill="#2f6a94" opacity="0.85"/><rect x="37.3" y="14.0" width="3.3" height="1.1" fill="#2f6a94" opacity="0.85"/><rect x="41.7" y="14.0" width="4.5" height="1.1" fill="#2f6a94" opacity="0.85"/><rect x="47.3" y="14.0" width="2.7" height="1.1" fill="#2f6a94" opacity="0.85"/><rect x="6.5" y="16.6" width="2.3" height="1.1" fill="#2f6a94" opacity="0.85"/><rect x="9.9" y="16.6" width="5.9" height="1.1" fill="#2f6a94" opacity="0.85"/><rect x="16.9" y="16.6" width="5.2" height="1.1" fill="#2f6a94" opacity="0.85"/><rect x="23.2" y="16.6" width="5.9" height="1.1" fill="#2f6a94" opacity="0.85"/><rect x="30.1" y="16.6" width="2.4" height="1.1" fill="#2f6a94" opacity="0.85"/><rect x="33.7" y="16.6" width="3.1" height="1.1" fill="#2f6a94" opacity="0.85"/><rect x="37.8" y="16.6" width="2.2" height="1.1" fill="#2f6a94" opacity="0.85"/><rect x="41.1" y="16.6" width="5.1" height="1.1" fill="#2f6a94" opacity="0.85"/><rect x="47.3" y="16.6" width="3.1" height="1.1" fill="#2f6a94" opacity="0.85"/><rect x="6.5" y="19.2" width="2.5" height="1.1" fill="#2f6a94" opacity="0.85"/><rect x="10.1" y="19.2" width="3.7" height="1.1" fill="#2f6a94" opacity="0.85"/><rect x="14.9" y="19.2" width="5.6" height="1.1" fill="#2f6a94" opacity="0.85"/><rect x="21.7" y="19.2" width="5.3" height="1.1" fill="#2f6a94" opacity="0.85"/><rect x="28.0" y="19.2" width="3.0" height="1.1" fill="#2f6a94" opacity="0.85"/><rect x="32.2" y="19.2" width="2.6" height="1.1" fill="#2f6a94" opacity="0.85"/><rect x="35.9" y="19.2" width="5.7" height="1.1" fill="#2f6a94" opacity="0.85"/><rect x="42.6" y="19.2" width="4.3" height="1.1" fill="#2f6a94" opacity="0.85"/><rect x="48.0" y="19.2" width="3.0" height="1.1" fill="#2f6a94" opacity="0.85"/><rect x="6.5" y="21.8" width="2.4" height="1.1" fill="#2f6a94" opacity="0.85"/><rect x="10.0" y="21.8" width="2.2" height="1.1" fill="#2f6a94" opacity="0.85"/><rect x="13.3" y="21.8" width="4.8" height="1.1" fill="#2f6a94" opacity="0.85"/><rect x="19.1" y="21.8" width="3.7" height="1.1" fill="#2f6a94" opacity="0.85"/><rect x="23.9" y="21.8" width="2.3" height="1.1" fill="#2f6a94" opacity="0.85"/><rect x="27.3" y="21.8" width="5.8" height="1.1" fill="#2f6a94" opacity="0.85"/><rect x="34.2" y="21.8" width="4.5" height="1.1" fill="#2f6a94" opacity="0.85"/><rect x="39.8" y="21.8" width="5.2" height="1.1" fill="#2f6a94" opacity="0.85"/><rect x="46.1" y="21.8" width="2.3" height="1.1" fill="#2f6a94" opacity="0.85"/><rect x="6.5" y="24.4" width="5.4" height="1.1" fill="#2f6a94" opacity="0.85"/><rect x="13.0" y="24.4" width="2.3" height="1.1" fill="#2f6a94" opacity="0.85"/><rect x="16.4" y="24.4" width="5.5" height="1.1" fill="#2f6a94" opacity="0.85"/><rect x="22.9" y="24.4" width="3.8" height="1.1" fill="#2f6a94" opacity="0.85"/><rect x="27.9" y="24.4" width="3.4" height="1.1" fill="#2f6a94" opacity="0.85"/><rect x="32.3" y="24.4" width="4.2" height="1.1" fill="#2f6a94" opacity="0.85"/><rect x="37.6" y="24.4" width="5.7" height="1.1" fill="#2f6a94" opacity="0.85"/><rect x="44.4" y="24.4" width="3.1" height="1.1" fill="#2f6a94" opacity="0.85"/><rect x="48.6" y="24.4" width="2.4" height="1.1" fill="#2f6a94" opacity="0.85"/><rect x="6.5" y="27.0" width="4.1" height="1.1" fill="#2f6a94" opacity="0.85"/><rect x="11.7" y="27.0" width="3.0" height="1.1" fill="#2f6a94" opacity="0.85"/><rect x="15.8" y="27.0" width="2.4" height="1.1" fill="#2f6a94" opacity="0.85"/><rect x="19.3" y="27.0" width="2.6" height="1.1" fill="#2f6a94" opacity="0.85"/><rect x="4" y="36.400" width="48" height="1" fill="#d8cf8c"/></svg></div>
    <svg class="st" style="top:239px" width="6" height="7" viewBox="0 0 6 7"><path d="M1 .5l4 6M5 .5l-4 6M0 3.500h6" stroke="#eef3fb" stroke-width="1"/></svg>
    <div class="th" style="top:276px"><svg width="56" height="42.5" viewBox="0 0 56 42.5" style="position:absolute;left:0;top:0"><rect width="56" height="42.5" fill="#fdfcf5"/><rect x="3" y="2.6" width="50" height=".9" fill="#d6cd88"/><rect x="3" y="2.6" width=".8" height="3.500" fill="#d6cd88"/><rect x="21" y="3.5" width="16" height="15" rx="3" fill="#dda21f" stroke="#6f5210" stroke-width=".8"/><rect x="24" y="9.5" width="10" height="1" fill="#c4462a"/><rect x="25" y="11.7" width="8" height=".8" fill="#8a5a14"/><rect x="3" y="25" width="16" height="15" rx="3" fill="#dda21f" stroke="#6f5210" stroke-width=".8"/><rect x="6" y="31" width="10" height="1" fill="#c4462a"/><rect x="7" y="33.2" width="8" height=".8" fill="#8a5a14"/><rect x="21" y="25" width="16" height="15" rx="3" fill="#dda21f" stroke="#6f5210" stroke-width=".8"/><rect x="24" y="31" width="10" height="1" fill="#c4462a"/><rect x="25" y="33.2" width="8" height=".8" fill="#8a5a14"/><rect x="39" y="25" width="16" height="15" rx="3" fill="#dda21f" stroke="#6f5210" stroke-width=".8"/><rect x="42" y="31" width="10" height="1" fill="#c4462a"/><rect x="43" y="33.2" width="8" height=".8" fill="#8a5a14"/><path d="M29 18.500V25M11 25v-2.500h36V25" fill="none" stroke="#6f5210" stroke-width=".9"/></svg></div>
    <svg class="st" style="top:290px" width="6" height="7" viewBox="0 0 6 7"><path d="M1 .5l4 6M5 .5l-4 6M0 3.500h6" stroke="#eef3fb" stroke-width="1"/></svg>
    <div class="th" style="top:327px"><svg width="56" height="42.5" viewBox="0 0 56 42.5" style="position:absolute;left:0;top:0"><rect width="56" height="42.5" fill="#fdfcf5"/><rect x="3" y="2.600" width="50" height=".9" fill="#d6cd88"/><rect x="4.0" y="4.8" width="5.5" height="1.3" fill="#5b7896" opacity="0.85"/><rect x="10.7" y="4.8" width="4.7" height="1.3" fill="#5b7896" opacity="0.85"/><rect x="16.6" y="4.8" width="3.1" height="1.3" fill="#5b7896" opacity="0.85"/><rect x="20.9" y="4.8" width="3.0" height="1.3" fill="#5b7896" opacity="0.85"/><rect x="25.1" y="4.8" width="3.2" height="1.3" fill="#5b7896" opacity="0.85"/><rect x="29.4" y="4.8" width="3.8" height="1.3" fill="#5b7896" opacity="0.85"/><rect x="5.0" y="10.4" width="6.0" height="1.7" fill="#1f2430" opacity="0.85"/><rect x="11.6" y="10.4" width="4.2" height="1.7" fill="#1f2430" opacity="0.85"/><rect x="16.4" y="10.4" width="5.0" height="1.7" fill="#1f2430" opacity="0.85"/><rect x="22.0" y="10.4" width="3.7" height="1.7" fill="#1f2430" opacity="0.85"/><rect x="26.3" y="10.4" width="4.4" height="1.7" fill="#1f2430" opacity="0.85"/><rect x="31.3" y="10.4" width="3.1" height="1.7" fill="#1f2430" opacity="0.85"/><rect x="35.0" y="10.4" width="4.0" height="1.7" fill="#1f2430" opacity="0.85"/><rect x="39.6" y="10.4" width="3.1" height="1.7" fill="#1f2430" opacity="0.85"/><rect x="43.2" y="10.4" width="5.9" height="1.7" fill="#1f2430" opacity="0.85"/><rect x="5.0" y="14.8" width="5.2" height="1.7" fill="#1f2430" opacity="0.85"/><rect x="10.8" y="14.8" width="3.2" height="1.7" fill="#1f2430" opacity="0.85"/><rect x="5.0" y="19.2" width="4.9" height="1.7" fill="#1f2430" opacity="0.85"/><rect x="10.5" y="19.2" width="6.7" height="1.7" fill="#1f2430" opacity="0.85"/><rect x="17.8" y="19.2" width="3.4" height="1.7" fill="#1f2430" opacity="0.85"/><rect x="21.9" y="19.2" width="6.3" height="1.7" fill="#1f2430" opacity="0.85"/><rect x="28.7" y="19.2" width="4.7" height="1.7" fill="#1f2430" opacity="0.85"/><rect x="34.1" y="19.2" width="1.9" height="1.7" fill="#1f2430" opacity="0.85"/><rect x="5.0" y="23.6" width="6.3" height="1.7" fill="#1f2430" opacity="0.85"/><rect x="11.9" y="23.6" width="4.6" height="1.7" fill="#1f2430" opacity="0.85"/><rect x="17.1" y="23.6" width="5.0" height="1.7" fill="#1f2430" opacity="0.85"/><rect x="22.7" y="23.6" width="5.8" height="1.7" fill="#1f2430" opacity="0.85"/><rect x="29.1" y="23.6" width="6.9" height="1.7" fill="#1f2430" opacity="0.85"/><rect x="36.6" y="23.6" width="4.4" height="1.7" fill="#1f2430" opacity="0.85"/><rect x="5.0" y="28.0" width="6.3" height="1.7" fill="#1f2430" opacity="0.85"/><rect x="11.9" y="28.0" width="5.8" height="1.7" fill="#1f2430" opacity="0.85"/><rect x="18.4" y="28.0" width="5.5" height="1.7" fill="#1f2430" opacity="0.85"/><rect x="24.5" y="28.0" width="4.6" height="1.7" fill="#1f2430" opacity="0.85"/><rect x="29.7" y="28.0" width="4.4" height="1.7" fill="#1f2430" opacity="0.85"/><rect x="34.7" y="28.0" width="3.2" height="1.7" fill="#1f2430" opacity="0.85"/><rect x="38.5" y="28.0" width="3.5" height="1.7" fill="#1f2430" opacity="0.85"/><rect x="42.6" y="28.0" width="3.3" height="1.7" fill="#1f2430" opacity="0.85"/><rect x="46.5" y="28.0" width="1.5" height="1.7" fill="#1f2430" opacity="0.85"/><rect x="5.0" y="32.4" width="4.0" height="1.7" fill="#1f2430" opacity="0.85"/><rect x="9.6" y="32.4" width="3.7" height="1.7" fill="#1f2430" opacity="0.85"/><rect x="13.9" y="32.4" width="3.3" height="1.7" fill="#1f2430" opacity="0.85"/><rect x="17.8" y="32.4" width="4.2" height="1.7" fill="#1f2430" opacity="0.85"/></svg></div>
    <svg class="st" style="top:341px" width="6" height="7" viewBox="0 0 6 7"><path d="M1 .5l4 6M5 .5l-4 6M0 3.500h6" stroke="#eef3fb" stroke-width="1"/></svg>
    <div class="th" style="top:378px;height:19px"><svg width="56" height="42.5" viewBox="0 0 56 42.5" style="position:absolute;left:0;top:0"><rect width="56" height="42.5" fill="#fdfcf5"/><rect x="3" y="2.600" width="50" height=".9" fill="#d6cd88"/><rect x="4.0" y="4.6" width="2.6" height="1.3" fill="#6c8a52" opacity="0.85"/><rect x="7.8" y="4.6" width="3.8" height="1.3" fill="#6c8a52" opacity="0.85"/><rect x="12.8" y="4.6" width="3.1" height="1.3" fill="#6c8a52" opacity="0.85"/><rect x="6.0" y="11.4" width="5.8" height="1" fill="#8a909a" opacity="0.8"/><rect x="13.0" y="11.4" width="5.9" height="1" fill="#8a909a" opacity="0.8"/><rect x="20.1" y="11.4" width="4.2" height="1" fill="#8a909a" opacity="0.8"/><rect x="25.5" y="11.4" width="3.0" height="1" fill="#8a909a" opacity="0.8"/><rect x="29.7" y="11.4" width="5.9" height="1" fill="#8a909a" opacity="0.8"/><rect x="36.8" y="11.4" width="3.2" height="1" fill="#8a909a" opacity="0.8"/><rect x="41.2" y="11.4" width="3.4" height="1" fill="#8a909a" opacity="0.8"/><rect x="6.0" y="15.6" width="2.0" height="1.3" fill="#3a4050" opacity="0.85"/><rect x="9.2" y="15.6" width="3.5" height="1.3" fill="#3a4050" opacity="0.85"/><rect x="13.9" y="15.6" width="3.9" height="1.3" fill="#3a4050" opacity="0.85"/><rect x="19.0" y="15.6" width="4.0" height="1.3" fill="#3a4050" opacity="0.85"/><rect x="24.2" y="15.6" width="2.8" height="1.3" fill="#3a4050" opacity="0.85"/><rect x="28.2" y="15.6" width="4.0" height="1.3" fill="#3a4050" opacity="0.85"/><rect x="33.5" y="15.6" width="2.0" height="1.3" fill="#3a4050" opacity="0.85"/><rect x="36.7" y="15.6" width="3.1" height="1.3" fill="#3a4050" opacity="0.85"/><rect x="40.9" y="15.6" width="2.4" height="1.3" fill="#3a4050" opacity="0.85"/><rect x="44.5" y="15.6" width="3.6" height="1.3" fill="#3a4050" opacity="0.85"/></svg></div>
    <svg class="st" style="top:392px" width="6" height="7" viewBox="0 0 6 7"><path d="M1 .5l4 6M5 .5l-4 6M0 3.500h6" stroke="#eef3fb" stroke-width="1"/></svg>
    <div class="vsb"><div class="up"></div><div class="thumb"></div><div class="dn"></div></div>
  </div>
  <div class="split"></div>

  <!-- workspace -->
  <div class="work">
    <div class="shine"></div>
    <div class="slide">
      <div class="sline"></div><div class="svline"></div>
      <div class="stitle">Вильгельм Вундт:</div>
      <div class="tbox">
        <i class="h c" style="left:-3.5px;top:-3.5px"></i><i class="h q" style="left:205px;top:-3.5px"></i><i class="h c" style="right:-3.5px;top:-3.5px"></i>
        <i class="h q" style="left:-3.5px;top:111.5px"></i><i class="h q" style="right:-3.5px;top:111.5px"></i>
        <i class="h c" style="left:-3.5px;bottom:-3.5px"></i><i class="h q" style="left:205px;bottom:-3.5px"></i><i class="h c" style="right:-3.5px;bottom:-3.5px"></i>
        <i class="rot"></i><i class="rotl"></i>
        <div class="body">«В будничных радостях и горестях жизни<br>нужно быть сангвиником, в важных<br>событиях – меланхоликом, относительно<br>влечений, глубоко затрагивающих наши<br>интересы, - холериком и, наконец, в<br>исполнении раз принятых решений –<br>флегматиком».<span class="caret"></span><span class="ibeam">I</span></div>
      </div>
      <div class="sbline"></div>
    </div>
    <div class="wsb"><div class="up"></div><div class="thumb"></div><div class="dn"></div><div class="pg"><b>▲</b><b>▲</b><b>▼</b><b>▼</b></div></div>
  </div>
  <div class="hsplit"></div>
  <div class="notes">Заметки к слайду<div class="nsb"></div></div>
  <div class="status">
    <span style="left:5px">Слайд 5 из 40</span><i style="left:59px"></i><span style="left:66px">"Край"</span><i style="left:94px"></i>
    <svg class="abs" style="left:101px;top:3px" width="11" height="10" viewBox="0 0 11 10"><path d="M1 6c2-2 6-2 8 0l-1 3H2z" fill="#e9edf5" stroke="#8b96ab" stroke-width=".7"/><path d="M5 1l4 4M9 1L5 5" stroke="#d8453b" stroke-width="1.3"/></svg>
    <span style="left:124px">Русский (Россия)</span><i style="left:191px"></i>
    <div class="sr">
      <div class="vb on"></div><div class="vb" style="left:13px"></div><div class="vb" style="left:26px"></div>
      <span style="left:47px;color:#1f3d78">70%</span>
      <div class="zc" style="left:69px">–</div><div class="zl"></div><div class="zt"></div><div class="zc" style="left:150px">+</div>
      <div class="fit"></div>
    </div>
  </div>
</div>

<!-- PARTICIPANTS -->
<div id="panel">
  <div class="tile" style="top:119px"><div class="big">Madiyar Abiev</div><div class="lab m" style="width:103.5px"><svg class="mic" width="13" height="15" viewBox="0 0 13 15"><rect x="3.700" y="1.700" width="5.600" height="8.600" rx="2.700" fill="#d2444a"/><path d="M2.600 7.600a3.900 3.900 0 0 0 7.800 0" fill="none" stroke="#d2444a" stroke-width=".9" opacity=".6"/><path d="M6.500 10.500v2.600M4.200 13.400h4.600" fill="none" stroke="#d2444a" stroke-width="1.200"/><path d="M12 1.400L1 13.400" stroke="#f3a9a9" stroke-width="1"/></svg><span class="sx" style="transform:scaleX(1.048)">Madiyar Abiev</span></div></div>
  <div class="tile" style="top:209px"><div class="big" style="transform:scaleX(.956);left:2px">Бахытгуль&nbsp; Солт...</div><div class="lab" style="width:126.6px"><span class="sx" style="transform:scaleX(0.968)">Бахытгуль Солтанова</span></div></div>
  <div id="act"></div>
  <div class="tile" style="top:299px">
    <svg class="abs" style="left:0;top:0" width="150" height="84" viewBox="0 0 150 84">
      <defs><filter id="b1"><feGaussianBlur stdDeviation="1.1"/></filter><filter id="b2"><feGaussianBlur stdDeviation="2.2"/></filter>
      <linearGradient id="wall" x1="0" x2="1"><stop offset="0" stop-color="#d6d1d7"/><stop offset=".5" stop-color="#dcd6d9"/><stop offset="1" stop-color="#d6cbcc"/></linearGradient></defs>
      <rect width="150" height="84" fill="url(#wall)"/>
      <g filter="url(#b1)">
        <rect x="36" y="-3" width="63" height="36" fill="#8f8c48"/><rect x="39.500" y="-1" width="56" height="30.500" fill="#a3c2e8"/><rect x="43" y="2" width="22" height="22" fill="#b6cfec"/><rect x="68" y="0" width="24" height="10" fill="#8fb2e0"/>
        <rect x="143.500" y="-2" width="8" height="68" fill="#cb3a2e"/>
        <path d="M42 88C38 50 52 12 78 12s40 38 33 76z" fill="#2a2427"/>
        <path d="M78 25c-8 4-16 10-21 20-4 10-5 24-4 43h50c2-19 1-33-4-43-5-10-13-16-21-20z" fill="#c9a698"/>
        <path d="M78 23c-10 2-20 10-24 24 6-10 14-16 24-19 10 3 18 9 24 19-4-14-14-22-24-24z" fill="#2a2427"/>
        <path d="M59 45c4-2.500 10-2.500 14 0M84 45.500c4-2.500 10-2.500 14-.5" stroke="#4c342e" stroke-width="2.200" fill="none"/>
        <ellipse cx="66" cy="53" rx="4" ry="1.600" fill="#3c2a28"/><ellipse cx="91" cy="53.500" rx="4" ry="1.600" fill="#3c2a28"/>
        <path d="M56 49h19l-1.500 11H58zM82 49.500h19L99.500 61H84z" fill="rgba(210,190,180,.25)" stroke="#65524a" stroke-width="1"/><path d="M75 52h7" stroke="#65524a" stroke-width="1"/>
        <path d="M76 60c0 4 0 6 2 7s3 0 4-1" stroke="#b08878" stroke-width="1" fill="none"/>
      </g>
    </svg>
    <div class="lab" style="width:139px;background:rgba(64,62,62,.8)"><span class="sx" style="transform:scaleX(0.993)">Assemgul Ayazbayeva A</span></div></div>
  <div class="tile" style="top:389px"><div class="big">Камила Серик</div><div class="lab m" style="width:104px"><svg class="mic" width="13" height="15" viewBox="0 0 13 15"><rect x="3.700" y="1.700" width="5.600" height="8.600" rx="2.700" fill="#d2444a"/><path d="M2.600 7.600a3.900 3.900 0 0 0 7.800 0" fill="none" stroke="#d2444a" stroke-width=".9" opacity=".6"/><path d="M6.500 10.500v2.600M4.200 13.400h4.600" fill="none" stroke="#d2444a" stroke-width="1.200"/><path d="M12 1.400L1 13.400" stroke="#f3a9a9" stroke-width="1"/></svg>Камила Серик</div></div>
  <div class="tile" style="top:479px">
    <svg class="abs" style="left:38px;top:5px" width="75" height="75" viewBox="0 0 75 75">
      <defs><radialGradient id="rbg" cx="0.1" cy="0.05" r="1.1"><stop offset="0" stop-color="#d2060e"/><stop offset=".3" stop-color="#a00a10"/><stop offset=".6" stop-color="#6a0a0e"/><stop offset="1" stop-color="#4a080c"/></radialGradient></defs>
      <rect width="75" height="75" fill="url(#rbg)"/>
      <g filter="url(#b1)">
        <path d="M0 22c8-3 18 0 24 6l-2 18-8 6-14-2z" fill="#25060a"/>
        <path d="M0 50l20-2 6 10-4 17H0z" fill="#6c0d12"/>
        <path d="M26 36c4-2 12-2 20 2l6 10-2 12-8 6-12-4-6-8-3-6z" fill="#ead6d2"/>
        <path d="M24 50l4 6 8 6-2 6-8-4z" fill="#d9bcb8"/>
        <path d="M22 24l3-8-2-1 6-4-1-4 7 1 2-6 6 4 5-5 4 5 7-3 2 6 7 0 1 7 5 3 1 10-3 6-6-2-4 4-6-3-5 4-6-4-6 2-5-5-6 2-3-6z" fill="#d9dcec"/>
        <path d="M30 18l8-6 10-2 8 4-6 2-8 0-6 6zM36 30l10-6 10 2-6 4-8 2z" fill="#a9acca" opacity=".8"/>
        <path d="M57 10l8 4 8 10-2 6-8-8-8-6z" fill="#2a2630"/>
        <path d="M56 34l8-4 10 2 1 22-6 10-10 2-4-12 4-10z" fill="#e4607c"/>
        <path d="M62 38l8 2-4 18-6 4zM58 50l4 12" fill="#c8203c" stroke="#f6e6ee" stroke-width="1"/>
        <path d="M50 36l8 4-2 10-6 4z" fill="#dcdcec"/>
        <path d="M34 42l6 1M37 45l1 6M42 44l4 2" stroke="#5a2a30" stroke-width="1.300"/>
        <path d="M30 62l10 4 10-2 10 8v3H26z" fill="#7c1418"/>
      </g>
    </svg>
    <div class="lab m" style="width:133.6px"><svg class="mic" width="13" height="15" viewBox="0 0 13 15"><rect x="3.700" y="1.700" width="5.600" height="8.600" rx="2.700" fill="#d2444a"/><path d="M2.600 7.600a3.900 3.900 0 0 0 7.800 0" fill="none" stroke="#d2444a" stroke-width=".9" opacity=".6"/><path d="M6.500 10.500v2.600M4.200 13.400h4.600" fill="none" stroke="#d2444a" stroke-width="1.200"/><path d="M12 1.400L1 13.400" stroke="#f3a9a9" stroke-width="1"/></svg><span class="sx" style="transform:scaleX(0.976)">Арыстан Файзуллин</span></div></div>
  <div class="tile" style="top:569px">
    <svg class="abs" style="left:38px;top:5px" width="75" height="75" viewBox="0 0 75 75">
      <defs><linearGradient id="obg" x1="0" y1="0" x2="1" y2=".6"><stop offset="0" stop-color="#e9a652"/><stop offset=".45" stop-color="#d2a578"/><stop offset="1" stop-color="#c6a68e"/></linearGradient></defs>
      <rect width="75" height="75" fill="url(#obg)"/>
      <g filter="url(#b1)">
        <rect x="0" y="40" width="75" height="35" fill="#b88c68" opacity=".7"/>
        <path d="M12 0h28c-2 6-8 9-15 8S13 5 12 0z" fill="#f2bc8c"/>
        <path d="M0 6c6 0 10 6 10 14s-4 12-10 12z" fill="#f0d6ac"/>
        <path d="M20 42c-8-10-10-24 0-34 8-8 26-9 36-2 10 8 12 22 6 36l-4 2c0-8-2-12-6-14l-18-2-8 4-3 10z" fill="#3a2a27"/>
        <path d="M22 40c0-8 6-14 18-14s18 6 18 14l-2 14-14 8-16-6z" fill="#b9764a"/>
        <path d="M18 30c6-8 14-10 22-8l-4 10-10 2-4 8zM40 22c8-2 18 2 20 12l-2 10-6-10-10-2z" fill="#3a2a27"/>
        <path d="M24 38.500c3-2 8-2 11 0M43 38.500c3-2 8-2 11 0" stroke="#20100c" stroke-width="2.600" fill="none"/>
        <path d="M18.500 42c12 3 24 3 35.500 0 2 8-2 17-8 20H27c-6-3-10-12-8.500-20z" fill="#ebe3d4"/>
        <path d="M24 48c8 2 18 2 26 0M26 54c8 2 16 2 22 0" stroke="#cfc4b0" stroke-width="1" fill="none"/>
        <path d="M67 40l6-5 2 34-6 6-4-4z" fill="#4b4232"/>
        <path d="M56 68l19-2v9H58z" fill="#f1efdf"/>
        <path d="M0 62c6-2 12 0 16 4l4 9H0z" fill="#efe6d2"/>
      </g>
    </svg>
    <div class="lab m" style="width:95px"><svg class="mic" width="13" height="15" viewBox="0 0 13 15"><rect x="3.700" y="1.700" width="5.600" height="8.600" rx="2.700" fill="#d2444a"/><path d="M2.600 7.600a3.900 3.900 0 0 0 7.800 0" fill="none" stroke="#d2444a" stroke-width=".9" opacity=".6"/><path d="M6.500 10.500v2.600M4.200 13.400h4.600" fill="none" stroke="#d2444a" stroke-width="1.200"/><path d="M12 1.400L1 13.400" stroke="#f3a9a9" stroke-width="1"/></svg><span class="sx" style="transform:scaleX(0.973)">Ораз Султан</span></div></div>
  <div class="tile" style="top:659px">
    <svg class="abs" style="left:38px;top:5px" width="75" height="75" viewBox="0 0 75 75">
      <defs><linearGradient id="fbg" x1="0" y1="0" x2="1" y2="1"><stop offset="0" stop-color="#d2d4d0"/><stop offset=".5" stop-color="#c4c6c2"/><stop offset="1" stop-color="#bdbfba"/></linearGradient></defs>
      <rect width="75" height="75" fill="url(#fbg)"/>
      <g filter="url(#b1)">
        <path d="M40 24C48 12 62 5 75 3v26c-4 8-12 12-22 12z" fill="#aab3a4" opacity=".9"/>
        <path d="M40 24C48 12 62 5 75 3M75 8c-4 10-6 20-12 30" fill="none" stroke="#6f746c" stroke-width="1"/>
        <path d="M42 36c8 0 16 2 22 4-2 10-6 18-12 24l-6-6z" fill="#a3ad9e" opacity=".9"/>
        <circle cx="53" cy="18" r="2" fill="#d8dcd4"/><circle cx="48" cy="48" r="1.800" fill="#d8dcd4"/>
        <path d="M14 30c6-6 18-6 24 0l6 22-4 14H16l-4-16z" fill="#b9a9aa"/>
        <path d="M28 26c6 4 10 10 12 18l4 20-4 2-8-22z" fill="#6a605e" opacity=".85"/>
        <circle cx="27.500" cy="13.500" r="10" fill="#35302e"/>
        <path d="M22 0l4 6M30 0l-1 5M40 0l-3 14" stroke="#4a4644" stroke-width=".8"/>
      </g>
    </svg>
    <div class="lab m" style="width:150px"><svg class="mic" width="13" height="15" viewBox="0 0 13 15"><rect x="3.700" y="1.700" width="5.600" height="8.600" rx="2.700" fill="#d2444a"/><path d="M2.600 7.600a3.900 3.900 0 0 0 7.800 0" fill="none" stroke="#d2444a" stroke-width=".9" opacity=".6"/><path d="M6.500 10.500v2.600M4.200 13.400h4.600" fill="none" stroke="#d2444a" stroke-width="1.200"/><path d="M12 1.400L1 13.400" stroke="#f3a9a9" stroke-width="1"/></svg><span class="sx" style="transform:scaleX(0.98)">Палагута&nbsp; Анна Серг...</span></div></div>
  <div class="tile" style="top:749px">
    <svg class="abs" style="left:0;top:0" width="150" height="84" viewBox="0 0 150 84">
      <rect width="150" height="84" fill="#f1f0f3"/>
      <g filter="url(#b1)">
        <rect x="0" y="0" width="13" height="18" fill="#bccbe8"/>
        <path d="M14 0h136v12L92 22 14 6z" fill="#f7f6f6"/>
        <path d="M90 22l60-10v50H90z" fill="#f3f0ee"/>
        <path d="M24 10l66 12v40H24z" fill="#eeeff6"/>
        <path d="M43 9l33 11" stroke="#3a3a44" stroke-width="1.800"/><path d="M28 18l20 5" stroke="#5a5a66" stroke-width="1.200"/>
        <rect x="53" y="19" width="14" height="17" fill="#c9cddc"/><path d="M53 19h14v17H53zM60 19v17M53 27h14" stroke="#5a5f72" stroke-width=".9" fill="none"/>
        <path d="M91 19l58-8v9l-58 9z" fill="#fbfbfb"/><path d="M95 24l52-8" stroke="#55555f" stroke-width="1.800"/>
        <rect x="101" y="42" width="7" height="18" fill="#6d6d78"/><rect x="108" y="37" width="9" height="11" fill="#b9bcc8"/><rect x="120" y="34" width="10" height="5" fill="#d6d4d4"/>
        <path d="M0 14c8-2 16 6 19 18l5 36H0z" fill="#d02638"/>
        <circle cx="22" cy="19" r="4.500" fill="#5c6a40"/>
        <path d="M15 26c4-4 12-2 13 6l1 14-8 6-6-4z" fill="#2a2321"/>
        <path d="M24 42c8-2 14 6 16 18l-18 4z" fill="#eef0f8"/><path d="M30 44l8 16M27 50l4 12" stroke="#27305a" stroke-width="1.800"/>
        <circle cx="43.500" cy="50" r="3.200" fill="#30282a"/><path d="M40 60c0-4 2-6 4-6s4 2 4 6z" fill="#d9c0b0"/>
        <path d="M52 40c0-6 4-8 6-8s6 2 6 8l-2 6h-8z" fill="#2c2422"/><path d="M55 40h7v6h-6z" fill="#b98a6c"/>
        <path d="M46 62c0-10 6-16 14-16s16 4 16 16z" fill="#d9b222"/>
        <circle cx="93" cy="37" r="2.600" fill="#4a3a34"/><path d="M89 44c0-5 2-7 4.500-7s4.500 2 4.500 7l-1 4h-7z" fill="#3a2c28"/><path d="M91 43h5v5h-5z" fill="#c49a84"/>
        <path d="M84 62c0-8 4-13 10-13s10 5 10 13z" fill="#1f1f24"/><ellipse cx="83" cy="59" rx="4" ry="2.500" fill="#26262c"/>
        <path d="M125 46c0-6 3-9 6.500-9s6.500 3 6.500 9l1 12h-15z" fill="#3a2a28"/><path d="M128 45h6v7h-6z" fill="#c49a88"/>
        <path d="M114 62c2-6 8-9 16-9s8 4 8 9z" fill="#2c262c"/><ellipse cx="125" cy="58" rx="3" ry="2.500" fill="#d8b8a8"/>
        <path d="M142 28c4-2 8-1 8 2v10h-9z" fill="#b9a88e"/><path d="M137 62c0-14 4-24 13-26v26z" fill="#e6e8f4"/>
        <path d="M22 61l128-2v19H0V66z" fill="#5f5a68"/>
        <path d="M24 61l126-2v4L30 66z" fill="#4e4a58"/>
        <path d="M0 76h150v8H0z" fill="#a898a8"/><path d="M40 78l110-2v5L60 84z" fill="#c9b4c2"/>
      </g>
    </svg>
    <div class="lab" style="width:32px;background:rgba(70,66,76,.55)"><span class="sx" style="transform:scaleX(0.97)">User</span></div></div>
  <div id="more"><svg width="16" height="9" viewBox="0 0 16 9"><path d="M2 1.5l6 5.5 6-5.5" fill="none" stroke="#c8c8c8" stroke-width="2"/></svg></div>
</div>

<!-- BOTTOM TOOLBAR -->
<div id="bar">
  <div id="tip">Нажмите, чтобы<br>подключить звук<i></i></div>
  <svg class="abs" style="left:43px;top:888px" width="26" height="20" viewBox="0 0 26 20"><path d="M3.6 13V10.5a9.4 9.4 0 0 1 18.8 0V13" fill="none" stroke="#bebebe" stroke-width="2.2"/><rect x="1" y="10.5" width="5.2" height="7.8" rx="2.2" fill="#bebebe"/><rect x="19.8" y="10.5" width="5.2" height="7.8" rx="2.2" fill="#bebebe"/><path d="M13 17.5V10M9.6 12.6L13 9l3.4 3.6" fill="none" stroke="#23d959" stroke-width="2"/></svg>
  <svg class="abs" style="left:94px;top:895px" width="9" height="6" viewBox="0 0 9 6"><path d="M1 5l3.5-3.5L8 5" fill="none" stroke="#bebebe" stroke-width="1.6"/></svg>
  <svg class="abs" style="left:147px;top:885px" width="28" height="26" viewBox="0 0 28 26"><rect x="2.5" y="6.5" width="16" height="13" rx="2.6" fill="#b8b8b8"/><path d="M19.5 11.2l5.5-3.6v10.8l-5.5-3.6z" fill="#b8b8b8"/><path d="M3 24.5L24.6 2" stroke="#e0484e" stroke-width="1.6"/></svg>
  <svg class="abs" style="left:468px;top:889px" width="24" height="19" viewBox="0 0 24 19"><circle cx="8" cy="5.4" r="4.2" fill="#bebebe"/><path d="M0.600 17.600v-2.800c0-3 2.400-4.600 4.600-4.600h5.600c2.200 0 4.600 1.600 4.600 4.600v2.800z" fill="#bebebe"/><circle cx="17.6" cy="6.2" r="3.3" fill="#bebebe"/><path d="M16.6 17.6c0-3-.6-4.8-2-6.2 1-.6 2-.8 3.2-.8 3.4 0 5.6 2 5.6 7z" fill="#bebebe"/></svg>
  <div class="abs" style="left:496px;top:889.500px;font-size:10.500px;font-weight:bold;color:#bebebe;line-height:12px;transform:scaleX(.8);transform-origin:0 0">17</div>
  <svg class="abs" style="left:525px;top:895px" width="9" height="6" viewBox="0 0 9 6"><path d="M1 5l3.5-3.5L8 5" fill="none" stroke="#bebebe" stroke-width="1.6"/></svg>
  <svg class="abs" style="left:568px;top:888px" width="21" height="20" viewBox="0 0 21 20"><path d="M3.6 1h13.8A2.6 2.6 0 0 1 20 3.6v8.2a2.6 2.6 0 0 1-2.6 2.6H10l-4.6 4.4v-4.4H3.6A2.6 2.6 0 0 1 1 11.800V3.6A2.600 2.600 0 0 1 3.6 1z" fill="#bebebe"/></svg>
  <svg class="abs" style="left:668px;top:888px" width="25" height="20" viewBox="0 0 25 20"><rect x=".8" y=".8" width="23.4" height="17.6" rx="3.4" fill="#23d959"/><path d="M12.5 14.200V6M9.2 8.800l3.300-3.400 3.300 3.400" fill="none" stroke="#14351e" stroke-width="1.8"/></svg>
  <svg class="abs" style="left:773px;top:888px" width="21" height="21" viewBox="0 0 21 21"><circle cx="10.500" cy="10.500" r="8.800" fill="none" stroke="#bebebe" stroke-width="1.6"/><circle cx="10.500" cy="10.500" r="6" fill="#bebebe"/></svg>
  <svg class="abs" style="left:849px;top:885px" width="24" height="24" viewBox="0 0 24 24"><circle cx="9.600" cy="14.400" r="7.800" fill="#bebebe"/><circle cx="6.900" cy="12.600" r="1.100" fill="#1a1a1a"/><circle cx="12.300" cy="12.600" r="1.100" fill="#1a1a1a"/><path d="M5.800 16.200c2 2.600 5.600 2.600 7.600 0" fill="none" stroke="#1a1a1a" stroke-width="1.300"/><circle cx="18.200" cy="5.600" r="4.600" fill="#1a1a1a"/><path d="M18.200 2.600v6M15.200 5.600h6" stroke="#bebebe" stroke-width="1.500"/></svg>
  <div class="tbtn" style="left:56px;transform:translateX(-50%) scaleX(0.926)">Подключить звук</div>
  <div class="tbtn" style="left:160.3px;transform:translateX(-50%) scaleX(0.895)">Включить видео</div>
  <div class="tbtn" style="left:480.4px;transform:translateX(-50%) scaleX(0.918)">Участники</div>
  <div class="tbtn" style="left:578.1px;transform:translateX(-50%) scaleX(0.81)">Чат</div>
  <div class="tbtn" style="left:681px;transform:translateX(-50%) scaleX(0.914);color:#27cf5c">Демонстрация экрана</div>
  <div class="tbtn" style="left:783.9px;transform:translateX(-50%) scaleX(0.881)">Запись</div>
  <div class="tbtn" style="left:858.75px;transform:translateX(-50%) scaleX(0.901)">Реакции</div>
  <div id="leave"><span class="sx" style="transform:scaleX(.924);transform-origin:50% 50%">Выйти</span></div>
</div>

<!-- TASKBAR -->
<div id="task">
  <div class="hl"></div>
  <svg class="abs" style="left:9px;top:7px" width="16" height="16" viewBox="0 0 16 16"><path d="M0 2.300l6.500-.900v6.100H0zM7.300 1.300L16 0v7.500H7.300zM0 8.300h6.500v6.100L0 13.500zM7.300 8.300H16V16l-8.700-1.200z" fill="#fff"/></svg>
  <svg class="abs" style="left:46px;top:8px" width="16" height="15" viewBox="0 0 16 15"><rect x=".5" y=".5" width="15" height="9.500" fill="#4ab4ee" stroke="#bfe4fa" stroke-width=".8"/><rect x="6.500" y="10" width="3" height="2.500" fill="#d8e6ee"/><rect x="2.500" y="12.500" width="11" height="1.800" fill="#e6eef4"/></svg>
  <svg class="abs" style="left:80.500px;top:7.500px" width="15.500" height="14.500" viewBox="0 0 17 16"><path d="M0 1.500h6l1.500 2H17v12H0z" fill="#f4c84a"/><path d="M0 5h17v10.500H0z" fill="#f9dc7c"/><rect x="4.500" y="8.500" width="8" height="7" fill="#4a90d6"/><rect x="6.500" y="11" width="4" height="4.500" fill="#f9dc7c"/></svg>
  <svg class="abs" style="left:115px;top:7px" width="16" height="16" viewBox="0 0 18 18"><rect x=".5" y=".5" width="17" height="17" rx="6.500" fill="#4a8cf7"/><rect x="4" y="6.200" width="6.800" height="5.600" rx="1.200" fill="#fff"/><path d="M11.400 8.200l2.800-1.800v5.200l-2.800-1.800z" fill="#fff"/></svg>
  <svg class="abs" style="left:150.500px;top:8px" width="14.500" height="14.500" viewBox="0 0 16 16"><circle cx="8" cy="8" r="8" fill="#e8453c"/><path d="M8 8L1.100 12A8 8 0 0 0 8 16l3.500-6z" fill="#3aa757"/><path d="M8 8l3.500 2L8 16A8 8 0 0 0 14.900 4H8z" fill="#fbc116"/><circle cx="8" cy="8" r="3.700" fill="#fff"/><circle cx="8" cy="8" r="2.900" fill="#4a8af4"/></svg>
  <svg class="abs" style="left:184px;top:8px" width="15.500" height="14" viewBox="0 0 17 16"><rect x="7" y="1.500" width="9.500" height="13" fill="#fff"/><path d="M9 4.500h6M9 7h6M9 9.500h6M9 12h6" stroke="#2b579a" stroke-width="1"/><path d="M0 1.600L10 0v16L0 14.400z" fill="#2b579a"/><path d="M2.200 5l1.300 6 1.500-5 1.500 5L7.800 5" fill="none" stroke="#fff" stroke-width="1.100"/></svg>
  <i class="ul" style="left:75px;width:26px"></i><i class="ul" style="left:106px;width:34px"></i><i class="ul" style="left:144px;width:27px"></i><i class="ul" style="left:179px;width:26px"></i>
  <svg class="abs" style="left:995px;top:11px" width="13" height="8" viewBox="0 0 13 8"><path d="M1 7l5.500-5.500L12 7" fill="none" stroke="#fff" stroke-width="1.300"/></svg>
  <svg class="abs" style="left:1017px;top:6px" width="15" height="17" viewBox="0 0 15 17"><rect x="1.500" y="5" width="8" height="7" rx="1" fill="none" stroke="#fff" stroke-width="1.200"/><path d="M9.500 7.500l3.500-2v6l-3.500-2" fill="none" stroke="#fff" stroke-width="1.200"/><path d="M3 2.500c2-1.500 5-1.500 7 0M3 14.500c2 1.500 5 1.500 7 0" fill="none" stroke="#fff" stroke-width="1"/></svg>
  <svg class="abs" style="left:1038px;top:8px" width="17" height="14" viewBox="0 0 17 14"><rect x="4.500" y="1.500" width="11" height="8" fill="none" stroke="#fff" stroke-width="1.200"/><path d="M10 9.500V12M7 12.500h6" stroke="#fff" stroke-width="1.200"/><rect x=".6" y=".6" width="4.500" height="3.500" fill="#1b3048" stroke="#fff" stroke-width="1"/><path d="M2.800 4V8h2" stroke="#fff" stroke-width="1" fill="none"/></svg>
  <svg class="abs" style="left:1060px;top:8px" width="18" height="15" viewBox="0 0 18 15"><path d="M1 5h2.500L7 1.500v11L3.500 9H1z" fill="none" stroke="#fff" stroke-width="1.100"/><circle cx="12" cy="10" r="3.800" fill="#e0343c"/><path d="M10.400 8.400l3.200 3.200M13.600 8.400l-3.200 3.200" stroke="#fff" stroke-width="1.100"/></svg>
  <div class="abs tt" style="left:1086px">ҚАЗ</div>
  <div class="abs tt" style="left:1119.5px;transform:scaleX(.9);transform-origin:0 0">09:17</div>
  <svg class="abs" style="left:1161px;top:7px" width="17" height="16" viewBox="0 0 17 16"><path d="M1 1h15v10.500h-4.500L8.500 14.500 5.500 11.500H1z" fill="none" stroke="#fff" stroke-width="1.200"/></svg>
  <i class="dsk"></i>
</div>


</body>
</html>
